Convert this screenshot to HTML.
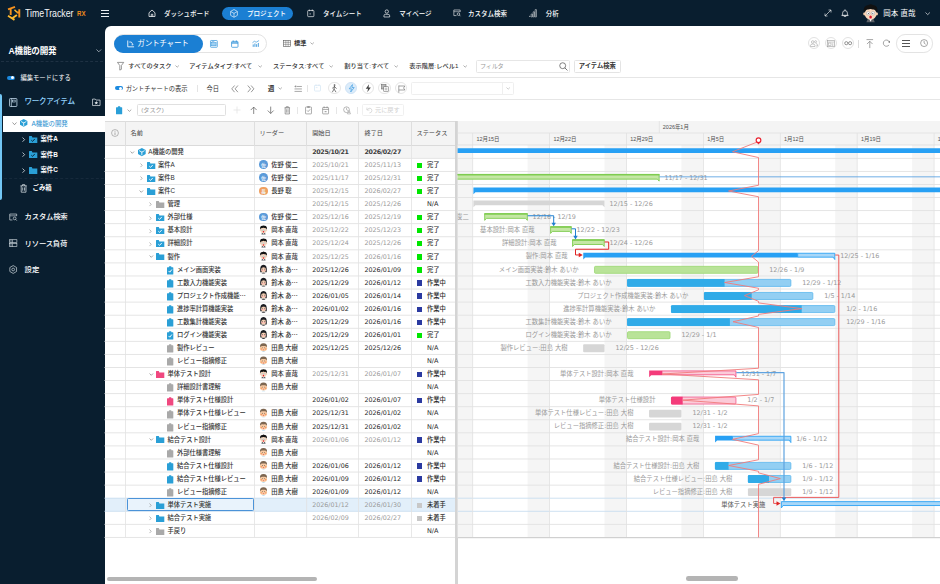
<!DOCTYPE html><html lang="ja"><head><meta charset="utf-8"><title>TimeTracker RX</title><style>
*{box-sizing:border-box;margin:0;padding:0}
html,body{width:940px;height:584px;overflow:hidden;background:#091e2f}
body{position:relative;font-family:"Liberation Sans","Noto Sans CJK JP",sans-serif;font-size:6.4px;color:#333;-webkit-font-smoothing:antialiased}
.a{position:absolute;white-space:nowrap}
.t{position:absolute;white-space:nowrap;line-height:10px;height:10px;margin-top:-5px}
.dj{font-family:"DejaVu Sans","Noto Sans CJK JP",sans-serif}
.w{color:#fff}
.nav{font-size:6.5px;font-weight:500;color:#fff}
.f{font-size:6.4px;color:#333}
.g{color:#999}
.hl{position:absolute;height:1px;background:#e6e6e6}
.vl{position:absolute;width:1px;background:#e6e6e6}
svg{position:absolute;left:0;top:0;overflow:visible}
</style></head><body>
<div class="a" style="left:104.50px;top:26.00px;width:836.00px;height:560.00px;background:#fff;border-top-left-radius:6px"></div>
<svg class="a" style="left:6.00px;top:4.00px;" width="16.00" height="18.00" viewBox="6 4 16 18"><g fill="none" stroke-width="1.9" stroke-linecap="butt"><path d="M8 9.4 L15 6.9 M10.7 8.4 V15" stroke="#f6921e"/><path d="M19.3 9.2 V17.4 M19.3 12.5 H16.8" stroke="#f6921e"/><path d="M17 12.3 L14.5 9.8" stroke="#fdb92e" stroke-width="1.5"/><path d="M8 15.8 L14.5 19.9 M12.3 18.2 L16.9 14.9" stroke="#fdb92e"/></g></svg>
<span class="t w" style="left:24.90px;top:14.00px;font-size:10.2px;transform:scaleX(0.86);transform-origin:left center;color:#f4f6f8">TimeTracker</span>
<span class="t " style="left:76.80px;top:14.40px;font-size:6.6px;font-weight:bold;color:#f28c1c;transform:scaleX(0.92);transform-origin:left center">RX</span>
<div class="a" style="left:101.20px;top:9.55px;width:7.60px;height:0.90px;background:#e8edf1"></div>
<div class="a" style="left:101.20px;top:12.55px;width:7.60px;height:0.90px;background:#e8edf1"></div>
<div class="a" style="left:101.20px;top:15.55px;width:7.60px;height:0.90px;background:#e8edf1"></div>
<svg class="a" style="left:147.50px;top:8.50px;" width="8.00" height="8.50" viewBox="0 0 16 17"><path d="M2 7.5 L8 2 L14 7.5 V15 H2 Z M6.5 15 V10.5 H9.5 V15" fill="none" stroke="#fff" stroke-width="1.5" stroke-linejoin="round"/></svg>
<span class="t nav" style="left:164.00px;top:13.80px;">ダッシュボード</span>
<div class="a" style="left:222.00px;top:6.80px;width:71.00px;height:13.00px;background:#1b7fd3;border-radius:6.5px"></div>
<svg class="a" style="left:230.20px;top:8.90px;" width="8.00" height="8.80" viewBox="0 0 16 17.6"><path d="M8 1 L14.8 4.9 V12.7 L8 16.6 L1.2 12.7 V4.9 Z M1.6 5.2 L8 8.8 L14.4 5.2 M8 8.8 V16.2" fill="none" stroke="#fff" stroke-width="1.25" stroke-linejoin="round"/></svg>
<span class="t nav" style="left:247.00px;top:13.80px;">プロジェクト</span>
<svg class="a" style="left:306.60px;top:9.00px;" width="7.60" height="8.40" viewBox="0 0 15 17"><rect x="1.2" y="3" width="12.6" height="12.5" rx="1.5" fill="none" stroke="#fff" stroke-width="1.3"/><path d="M4.5 1 V4.5 M10.5 1 V4.5" stroke="#fff" stroke-width="1.3"/><path d="M5 10 h2.5" stroke="#fff" stroke-width="1.6"/></svg>
<span class="t nav" style="left:323.00px;top:13.80px;">タイムシート</span>
<svg class="a" style="left:383.00px;top:8.80px;" width="7.60" height="8.60" viewBox="0 0 15 17"><circle cx="7.5" cy="5" r="3.3" fill="none" stroke="#fff" stroke-width="1.3"/><path d="M1.8 15.8 V13.5 Q1.8 10.5 5 10.5 H10 Q13.2 10.5 13.2 13.5 V15.8 Z" fill="none" stroke="#fff" stroke-width="1.3"/></svg>
<span class="t nav" style="left:399.20px;top:13.80px;">マイページ</span>
<svg class="a" style="left:452.50px;top:9.30px;" width="8.00" height="7.80" viewBox="0 0 16 16"><path d="M14.5 6 V2 H1.5 V13.5 H7" fill="none" stroke="#fff" stroke-width="1.2"/><path d="M1.5 5.5 H14.5" stroke="#fff" stroke-width="1"/><circle cx="11" cy="10.5" r="2.6" fill="none" stroke="#fff" stroke-width="1.2"/><path d="M13 12.5 L15 14.8" stroke="#fff" stroke-width="1.2"/></svg>
<span class="t nav" style="left:468.00px;top:13.80px;">カスタム検索</span>
<svg class="a" style="left:529.30px;top:9.00px;" width="8.00" height="8.50" viewBox="0 0 16 17"><circle cx="1.6" cy="14.6" r="1.1" fill="#fff"/><rect x="4.3" y="10" width="2.6" height="6" rx="0.6" fill="none" stroke="#fff" stroke-width="1"/><rect x="8.3" y="5.5" width="2.6" height="10.5" rx="0.6" fill="none" stroke="#fff" stroke-width="1"/><rect x="12.3" y="1" width="2.6" height="15" rx="0.6" fill="none" stroke="#fff" stroke-width="1"/></svg>
<span class="t nav" style="left:545.70px;top:13.80px;">分析</span>
<svg class="a" style="left:824.30px;top:9.20px;" width="8.00" height="8.00" viewBox="0 0 16 16"><path d="M2 14 L14 2 M9 2 H14 V7 M2 9 V14 H7" fill="none" stroke="#fff" stroke-width="1.2"/></svg>
<svg class="a" style="left:840.50px;top:8.80px;" width="8.00" height="8.60" viewBox="0 0 16 17"><path d="M3.2 12.5 V8 Q3.2 3.2 8 3.2 Q12.8 3.2 12.8 8 V12.5 Z M1.5 12.5 H14.5 M6.5 14.8 Q8 16 9.5 14.8 M8 1.2 V3" fill="none" stroke="#fff" stroke-width="1.3" stroke-linecap="round" stroke-linejoin="round"/></svg>
<svg width="940" height="584" style="pointer-events:none"><g transform="translate(870.60 13.00) scale(1.000)"><path d="M-4.2 9.2 L-3 6 L3 6 L4.2 9.2 Z" fill="#5a5f66"/><path d="M-1.3 6 L0 8.8 L1.3 6Z" fill="#fff"/><ellipse cx="-6.2" cy="0.8" rx="1.2" ry="1.6" fill="#f2c9a8"/><ellipse cx="6.2" cy="0.8" rx="1.2" ry="1.6" fill="#f2c9a8"/><ellipse cx="0" cy="0.8" rx="5.9" ry="5.8" fill="#f8d7bb"/><path d="M-6.6 -0.2 Q-8 -7.6 -2 -8 Q0 -9.4 2.4 -8 Q8 -7.4 6.6 -0.2 Q5.6 -4.2 2 -3.4 Q0 -4.6 -2.4 -3.4 Q-5.6 -4 -6.6 -0.2Z" fill="#111"/><circle cx="-2.4" cy="0.3" r="1.7" fill="#fff" stroke="#999" stroke-width="0.5"/><circle cx="2.4" cy="0.3" r="1.7" fill="#fff" stroke="#999" stroke-width="0.5"/><circle cx="-2.2" cy="0.4" r="0.5" fill="#333"/><circle cx="2.2" cy="0.4" r="0.5" fill="#333"/><ellipse cx="0" cy="4" rx="1.3" ry="1.5" fill="#e0142c"/></g></svg>
<span class="t nav" style="left:883.30px;top:13.70px;font-size:7.5px;font-weight:400">岡本 直哉</span>
<svg class="a" style="left:925.30px;top:11.50px;" width="5.40" height="3.40" viewBox="0 0 11 7"><path d="M1 1 L5.5 5.5 L10 1" fill="none" stroke="#fff" stroke-width="1.3"/></svg>
<span class="t w" style="left:8.50px;top:50.50px;font-size:8.6px;font-weight:bold;letter-spacing:-0.2px">A機能の開発</span>
<svg class="a" style="left:96.00px;top:49.00px;" width="5.60" height="3.60" viewBox="0 0 12 7.6"><path d="M1 1 L6 6 L11 1" fill="none" stroke="#c7d0d8" stroke-width="1.5"/></svg>
<div class="a" style="left:1.00px;top:61.30px;width:102.00px;height:0.00px;border-top:0.6px dashed #1e3143"></div>
<div class="a" style="left:6.70px;top:75.50px;width:8.50px;height:4.80px;background:#1b8ae0;border-radius:2.4px"></div>
<div class="a" style="left:11.20px;top:76.30px;width:3.20px;height:3.20px;background:#fff;border-radius:1.6px"></div>
<span class="t w" style="left:20.40px;top:78.10px;font-size:6.3px">編集モードにする</span>
<div class="a" style="left:0.00px;top:93.50px;width:2.40px;height:106.00px;background:#73c7f5;border-radius:0 2px 2px 0"></div>
<svg class="a" style="left:9.00px;top:97.70px;" width="8.40" height="9.00" viewBox="0 0 16.8 18"><rect x="1" y="1" width="14.8" height="16" rx="1.6" fill="none" stroke="#cfe6f7" stroke-width="1.5"/><path d="M4.6 1 V17" stroke="#cfe6f7" stroke-width="1.4"/><rect x="7.4" y="4.2" width="5" height="3.8" fill="none" stroke="#cfe6f7" stroke-width="1.2"/></svg>
<span class="t " style="left:24.40px;top:101.80px;font-size:7.6px;color:#8fd0fb;letter-spacing:-0.3px;font-weight:500">ワークアイテム</span>
<svg class="a" style="left:92.30px;top:97.80px;" width="8.60" height="8.10" viewBox="0 0 16 15"><path d="M1 2 H6 L7.5 3.8 H15 V14 H1 Z" fill="none" stroke="#e6edf2" stroke-width="1.3"/><path d="M8 5.5 L9 8 L11.5 8 L9.5 9.6 L10.3 12.2 L8 10.6 L5.7 12.2 L6.5 9.6 L4.5 8 L7 8 Z" fill="#e6edf2"/></svg>
<div class="a" style="left:3.00px;top:115.70px;width:101.50px;height:16.10px;background:#fff"></div>
<svg class="a" style="left:11.80px;top:121.50px;" width="5.00" height="3.40" viewBox="0 0 10 6.8"><path d="M1 1 L5 5.4 L9 1" fill="none" stroke="#666" stroke-width="1.3"/></svg>
<svg class="a" style="left:20.30px;top:119.30px;" width="7.40" height="7.84" viewBox="0 0 15.4 16.3"><path d="M7.7 0 L15.4 4.1 V12.2 L7.7 16.3 L0 12.2 V4.1 Z" fill="#2a9fd6"/><path d="M2.9 5.6 L7.7 8.3 L12.5 5.6 M7.7 8.3 V13.6" fill="none" stroke="#fff" stroke-width="1.7" stroke-linecap="round"/></svg>
<span class="t " style="left:31.50px;top:123.50px;font-size:6.4px;color:#2a8fd0">A機能の開発</span>
<svg class="a" style="left:22.30px;top:136.70px;" width="3.15" height="5.25" viewBox="0 0 6 10"><path d="M1 1 L5 5 L1 9" fill="none" stroke="#d3dae0" stroke-width="1.6"/></svg>
<svg class="a" style="left:29.00px;top:135.60px;" width="8.30" height="7.00" viewBox="0 0 16.6 14"><path d="M0 1 Q0 0 1 0 H5.6 L6.8 2.9 H16.6 V14 H0 Z" fill="#2a9fd6"/><path d="M4.6 8.4 L7.1 10.8 L11.6 5.9" fill="none" stroke="#091e2f" stroke-width="1.8"/></svg>
<span class="t w" style="left:40.40px;top:139.20px;font-size:6.4px;font-weight:bold">案件A</span>
<svg class="a" style="left:22.30px;top:152.30px;" width="3.15" height="5.25" viewBox="0 0 6 10"><path d="M1 1 L5 5 L1 9" fill="none" stroke="#d3dae0" stroke-width="1.6"/></svg>
<svg class="a" style="left:29.00px;top:151.20px;" width="8.30" height="7.00" viewBox="0 0 16.6 14"><path d="M0 1 Q0 0 1 0 H5.6 L6.8 2.9 H16.6 V14 H0 Z" fill="#2a9fd6"/><path d="M4.6 8.4 L7.1 10.8 L11.6 5.9" fill="none" stroke="#091e2f" stroke-width="1.8"/></svg>
<span class="t w" style="left:40.40px;top:154.80px;font-size:6.4px;font-weight:bold">案件B</span>
<svg class="a" style="left:22.30px;top:167.90px;" width="3.15" height="5.25" viewBox="0 0 6 10"><path d="M1 1 L5 5 L1 9" fill="none" stroke="#d3dae0" stroke-width="1.6"/></svg>
<svg class="a" style="left:29.00px;top:166.80px;" width="8.30" height="7.00" viewBox="0 0 16.6 14"><path d="M0 1 Q0 0 1 0 H5.6 L6.8 2.9 H16.6 V14 H0 Z" fill="#2a9fd6"/></svg>
<span class="t w" style="left:40.40px;top:170.40px;font-size:6.4px;font-weight:bold">案件C</span>
<div class="a" style="left:4.00px;top:178.30px;width:100.00px;height:0.00px;border-top:0.6px dashed #16293b"></div>
<svg class="a" style="left:19.80px;top:184.00px;" width="7.20" height="8.80" viewBox="0 0 14.4 17.6"><path d="M1 3.6 H13.4 M5 3.6 V1.2 H9.4 V3.6 M2.4 3.6 V16.4 H12 V3.6 M5.4 6.8 V13.4 M9 6.8 V13.4" fill="none" stroke="#e6edf2" stroke-width="1.4"/></svg>
<span class="t w" style="left:32.50px;top:188.30px;font-size:6.4px;font-weight:bold">ごみ箱</span>
<svg class="a" style="left:8.50px;top:212.80px;" width="8.40" height="8.00" viewBox="0 0 17 16"><path d="M15.5 6 V2 H1.5 V14 H7" fill="none" stroke="#dfe7ec" stroke-width="1.3"/><path d="M1.5 5.6 H15.5" stroke="#dfe7ec" stroke-width="1.1"/><circle cx="11.5" cy="10.8" r="2.8" fill="none" stroke="#dfe7ec" stroke-width="1.3"/><path d="M13.6 13 L15.8 15.4" stroke="#dfe7ec" stroke-width="1.3"/></svg>
<span class="t w" style="left:24.60px;top:217.20px;font-size:7.4px;letter-spacing:-0.25px;font-weight:500">カスタム検索</span>
<svg class="a" style="left:8.50px;top:238.80px;" width="8.40" height="8.40" viewBox="0 0 17 17"><rect x="1" y="1.5" width="15" height="6" fill="none" stroke="#dfe7ec" stroke-width="1.2"/><rect x="1" y="9.5" width="15" height="6" fill="none" stroke="#dfe7ec" stroke-width="1.2"/><path d="M4 1.5 V7.5 M7 1.5 V7.5 M4 9.5 V15.5 M7 9.5 V15.5" stroke="#dfe7ec" stroke-width="1.1"/></svg>
<span class="t w" style="left:24.60px;top:243.80px;font-size:7.4px;letter-spacing:-0.25px;font-weight:500">リソース負荷</span>
<svg class="a" style="left:8.50px;top:264.60px;" width="8.40" height="9.00" viewBox="0 0 17 18"><path d="M8.5 1 L15.3 5 V13 L8.5 17 L1.7 13 V5 Z" fill="none" stroke="#dfe7ec" stroke-width="1.3"/><circle cx="8.5" cy="9" r="2.8" fill="none" stroke="#dfe7ec" stroke-width="1.3"/></svg>
<span class="t w" style="left:24.60px;top:269.80px;font-size:7.4px;font-weight:500">設定</span>
<div class="a" style="left:114.30px;top:34.20px;width:152.40px;height:18.90px;border:0.8px solid #e3e3e3;border-radius:9.5px;background:#fff"></div>
<div class="a" style="left:114.30px;top:34.50px;width:89.00px;height:18.10px;background:#1b7fd3;border-radius:9.1px"></div>
<svg class="a" style="left:127.00px;top:39.90px;" width="7.60" height="7.60" viewBox="0 0 15 15"><path d="M1.5 1 V13.5 H14" fill="none" stroke="#fff" stroke-width="1.7"/><path d="M4.5 4 H8.5 L12 9.5 H9" fill="none" stroke="#fff" stroke-width="1.5"/></svg>
<span class="t w" style="left:137.30px;top:43.80px;font-size:7.6px;letter-spacing:-0.25px">ガントチャート</span>
<svg class="a" style="left:210.00px;top:39.70px;" width="7.80" height="7.80" viewBox="0 0 16 16"><rect x="1" y="1" width="14" height="14" rx="1.5" fill="none" stroke="#2a8fd8" stroke-width="1.4"/><rect x="3.5" y="5.5" width="9" height="6.5" fill="#9fd0f2" stroke="#2a8fd8" stroke-width="1"/><path d="M3.5 3.3 H9" stroke="#2a8fd8" stroke-width="1.1"/></svg>
<svg class="a" style="left:230.80px;top:39.60px;" width="7.60" height="7.90" viewBox="0 0 15 16"><rect x="1" y="2.8" width="13" height="12" rx="1.5" fill="#fff" stroke="#2a8fd8" stroke-width="1.5"/><path d="M1 6 H14" stroke="#2a8fd8" stroke-width="2.4"/><path d="M4.3 0.8 V4 M10.7 0.8 V4" stroke="#2a8fd8" stroke-width="1.4"/></svg>
<svg class="a" style="left:252.00px;top:40.00px;" width="7.80" height="7.40" viewBox="0 0 16 15"><path d="M1 5.5 L5 2.5 L8.5 4.5 L14.5 1" fill="none" stroke="#2a8fd8" stroke-width="1.3"/><path d="M2.5 9 V14 M6 7 V14 M9.5 8.5 V14 M13 6 V14" stroke="#2a8fd8" stroke-width="1.7"/></svg>
<svg class="a" style="left:283.00px;top:39.70px;" width="8.00" height="6.80" viewBox="0 0 16 14"><rect x="0.7" y="0.7" width="14.6" height="12.6" fill="none" stroke="#555" stroke-width="1.2"/><path d="M0.7 4.8 H15.3 M0.7 9 H15.3 M5.6 0.7 V13.3 M10.4 0.7 V13.3" stroke="#555" stroke-width="0.9"/></svg>
<span class="t " style="left:294.00px;top:43.30px;font-size:6.2px;font-weight:bold;color:#333">標準</span>
<svg class="a" style="left:310.00px;top:42.20px;" width="4.40" height="2.80" viewBox="0 0 9 5.6"><path d="M1 1 L4.5 4.4 L8 1" fill="none" stroke="#777" stroke-width="1.2"/></svg>
<div class="a" style="left:808.20px;top:37.30px;width:12.20px;height:12.20px;border:0.7px solid #e2e2e2;border-radius:6.1px"></div>
<div class="a" style="left:825.10px;top:37.30px;width:12.20px;height:12.20px;border:0.7px solid #e2e2e2;border-radius:6.1px"></div>
<div class="a" style="left:841.90px;top:37.30px;width:12.20px;height:12.20px;border:0.7px solid #e2e2e2;border-radius:6.1px"></div>
<svg class="a" style="left:810.30px;top:39.80px;" width="8.00" height="7.20" viewBox="0 0 16 14.4"><circle cx="5.5" cy="4" r="2.6" fill="none" stroke="#999" stroke-width="1.1"/><path d="M1 13 V11 Q1 8 5.5 8 Q10 8 10 11 V13 Z" fill="none" stroke="#999" stroke-width="1.1"/><circle cx="11.3" cy="3.3" r="2" fill="none" stroke="#999" stroke-width="1"/><path d="M11.5 7 Q15 7 15 10 V12 H12" fill="none" stroke="#999" stroke-width="1"/></svg>
<svg class="a" style="left:827.30px;top:39.80px;" width="7.80" height="7.20" viewBox="0 0 16 14.4"><rect x="0.8" y="0.8" width="14.4" height="12.8" fill="none" stroke="#999" stroke-width="1.2"/><path d="M0.8 4 H15.2" stroke="#999" stroke-width="1"/><rect x="3.2" y="6" width="5" height="5" fill="none" stroke="#999" stroke-width="1"/><path d="M10 6.5 H13 M10 9 H13 M10 11.2 H13" stroke="#999" stroke-width="0.9"/></svg>
<svg class="a" style="left:843.80px;top:41.30px;" width="8.40" height="4.40" viewBox="0 0 17 9"><circle cx="4.6" cy="4.5" r="3.2" fill="none" stroke="#777" stroke-width="1.6"/><circle cx="12.4" cy="4.5" r="3.2" fill="none" stroke="#777" stroke-width="1.6"/></svg>
<div class="a" style="left:858.30px;top:39.50px;width:0.70px;height:8.00px;background:#ddd"></div>
<svg class="a" style="left:865.50px;top:38.60px;" width="7.60" height="9.60" viewBox="0 0 15 19"><path d="M1 1.2 H14 M7.5 18 V4.5 M2 10 L7.5 4.5 L13 10" fill="none" stroke="#777" stroke-width="1.3"/></svg>
<svg class="a" style="left:881.80px;top:39.30px;" width="8.60" height="8.20" viewBox="0 0 17 16"><path d="M14 11.5 A6.2 6.2 0 1 1 14.2 5" fill="none" stroke="#777" stroke-width="1.3"/><path d="M15.8 7.6 L15.5 3.2 L11.6 5.6 Z" fill="#777"/></svg>
<div class="a" style="left:896.40px;top:34.40px;width:36.40px;height:18.20px;border:0.8px solid #e3e3e3;border-radius:9.1px"></div>
<div class="a" style="left:902.20px;top:40.35px;width:7.80px;height:0.90px;background:#555"></div>
<div class="a" style="left:902.20px;top:43.05px;width:7.80px;height:0.90px;background:#555"></div>
<div class="a" style="left:902.20px;top:45.75px;width:7.80px;height:0.90px;background:#555"></div>
<svg class="a" style="left:919.80px;top:39.40px;" width="8.20" height="8.20" viewBox="0 0 16 16"><circle cx="8" cy="8" r="6.8" fill="none" stroke="#777" stroke-width="1.3"/><path d="M8 3.8 V8 L11 10.2" fill="none" stroke="#777" stroke-width="1.3"/></svg>
<svg class="a" style="left:117.20px;top:62.00px;" width="7.20" height="8.60" viewBox="0 0 14 17"><path d="M0.8 0.8 H13.2 L8.6 7 V14.5 L5.4 16 V7 Z" fill="none" stroke="#666" stroke-width="1.3" stroke-linejoin="round"/></svg>
<span class="t f" style="left:128.30px;top:66.30px;font-size:6.2px;font-weight:500;letter-spacing:0.1px">すべてのタスク</span>
<svg class="a" style="left:174.80px;top:65.30px;" width="4.40" height="2.80" viewBox="0 0 9 5.6"><path d="M1 1 L4.5 4.4 L8 1" fill="none" stroke="#777" stroke-width="1.2"/></svg>
<span class="t f" style="left:189.30px;top:66.30px;font-size:6.2px;letter-spacing:0.05px;font-weight:500">アイテムタイプ:すべて</span>
<svg class="a" style="left:258.20px;top:65.30px;" width="4.40" height="2.80" viewBox="0 0 9 5.6"><path d="M1 1 L4.5 4.4 L8 1" fill="none" stroke="#777" stroke-width="1.2"/></svg>
<span class="t f" style="left:273.00px;top:66.30px;font-size:6.2px;font-weight:500;letter-spacing:0.1px">ステータス:すべて</span>
<svg class="a" style="left:328.70px;top:65.30px;" width="4.40" height="2.80" viewBox="0 0 9 5.6"><path d="M1 1 L4.5 4.4 L8 1" fill="none" stroke="#777" stroke-width="1.2"/></svg>
<span class="t f" style="left:344.20px;top:66.30px;font-size:6.2px;font-weight:500;letter-spacing:0.1px">割り当て:すべて</span>
<svg class="a" style="left:393.70px;top:65.30px;" width="4.40" height="2.80" viewBox="0 0 9 5.6"><path d="M1 1 L4.5 4.4 L8 1" fill="none" stroke="#777" stroke-width="1.2"/></svg>
<span class="t f" style="left:409.20px;top:66.30px;font-size:6.2px;font-weight:500;letter-spacing:0.1px">表示階層:レベル1</span>
<svg class="a" style="left:462.50px;top:65.30px;" width="4.40" height="2.80" viewBox="0 0 9 5.6"><path d="M1 1 L4.5 4.4 L8 1" fill="none" stroke="#777" stroke-width="1.2"/></svg>
<div class="a" style="left:475.50px;top:60.40px;width:94.50px;height:12.20px;border:0.7px solid #e6e6e6;border-radius:1.5px;background:#fff"></div>
<span class="t " style="left:480.00px;top:66.30px;font-size:6.2px;color:#999;letter-spacing:-0.3px">フィルタ</span>
<svg class="a" style="left:559.30px;top:61.80px;" width="9.00" height="9.00" viewBox="0 0 17 17"><circle cx="7" cy="7" r="5.6" fill="none" stroke="#555" stroke-width="1.4"/><path d="M11 11 L16 16" stroke="#555" stroke-width="1.5"/></svg>
<div class="a" style="left:574.30px;top:60.40px;width:46.50px;height:12.20px;border:0.7px solid #e4e4e4;border-radius:1.5px;background:#fff"></div>
<span class="t " style="left:578.70px;top:66.30px;font-size:6.3px;font-weight:600;color:#333">アイテム検索</span>
<div class="a" style="left:104.50px;top:77.10px;width:836.00px;height:0.80px;background:#e6e6e6"></div>
<div class="a" style="left:114.80px;top:86.10px;width:8.20px;height:4.40px;background:#1b8ae0;border-radius:2.2px"></div>
<div class="a" style="left:119.20px;top:86.80px;width:3.00px;height:3.00px;background:#fff;border-radius:1.5px"></div>
<span class="t f" style="left:125.70px;top:88.70px;font-size:6.3px;letter-spacing:-0.12px">ガントチャートの表示</span>
<div class="a" style="left:197.20px;top:84.50px;width:0.70px;height:7.50px;background:#e4e4e4"></div>
<span class="t f" style="left:206.40px;top:88.70px;font-size:6.3px">今日</span>
<svg class="a" style="left:230.60px;top:84.60px;" width="7.70" height="7.70" viewBox="0 0 15 15"><path d="M7 1 L1.5 7.5 L7 14 M13.5 1 L8 7.5 L13.5 14" fill="none" stroke="#666" stroke-width="1.3"/></svg>
<svg class="a" style="left:246.80px;top:84.60px;" width="7.70" height="7.70" viewBox="0 0 15 15"><path d="M1.5 1 L7 7.5 L1.5 14 M8 1 L13.5 7.5 L8 14" fill="none" stroke="#666" stroke-width="1.3"/></svg>
<span class="t f" style="left:268.00px;top:88.70px;font-size:6.3px;font-weight:bold">週</span>
<svg class="a" style="left:277.80px;top:87.20px;" width="4.40" height="2.80" viewBox="0 0 9 5.6"><path d="M1 1 L4.5 4.4 L8 1" fill="none" stroke="#777" stroke-width="1.2"/></svg>
<svg class="a" style="left:293.80px;top:84.60px;" width="8.40" height="7.40" viewBox="0 0 17 15"><path d="M1 3 H5 M1 8 H16 M1 13 H16 M6 3 H16" stroke="#777" stroke-width="1.3"/><path d="M3.5 0.5 V5" stroke="#777" stroke-width="1.1"/></svg>
<div class="a" style="left:307.00px;top:84.50px;width:0.70px;height:7.50px;background:#e4e4e4"></div>
<svg class="a" style="left:314.30px;top:84.40px;" width="7.00" height="7.60" viewBox="0 0 14 15"><rect x="1" y="2.5" width="12" height="11.5" rx="1.3" fill="none" stroke="#cfe3f3" stroke-width="1.3"/><path d="M4 0.8 V4 M10 0.8 V4 M3.5 7 H7" stroke="#cfe3f3" stroke-width="1.2"/></svg>
<div class="a" style="left:328.30px;top:81.90px;width:12.40px;height:12.40px;border:0.7px solid #e6e6e6;border-radius:6.2px;background:#fff"></div>
<div class="a" style="left:345.00px;top:81.90px;width:12.40px;height:12.40px;border:0.7px solid #cfe3f6;border-radius:6.2px;background:#dcecfa"></div>
<div class="a" style="left:361.80px;top:81.90px;width:12.40px;height:12.40px;border:0.7px solid #e6e6e6;border-radius:6.2px;background:#fff"></div>
<div class="a" style="left:378.40px;top:81.90px;width:12.40px;height:12.40px;border:0.7px solid #e6e6e6;border-radius:6.2px;background:#fff"></div>
<div class="a" style="left:395.10px;top:81.90px;width:12.40px;height:12.40px;border:0.7px solid #e6e6e6;border-radius:6.2px;background:#fff"></div>
<svg class="a" style="left:331.20px;top:84.00px;" width="6.60" height="8.60" viewBox="0 0 13 17"><circle cx="7" cy="2" r="1.7" fill="#555"/><path d="M7 4.5 L6 10 L3 15.5 M6 10 L9.5 15.5 M6.8 5 L3 8 M7 5.5 L10.5 8.5" fill="none" stroke="#555" stroke-width="1.5" stroke-linecap="round"/></svg>
<svg class="a" style="left:347.60px;top:84.00px;" width="7.40" height="8.60" viewBox="0 0 15 17"><path d="M9 1 L2.5 9.5 H7 L5.5 16 L12.5 7 H8 Z" fill="none" stroke="#3a9be0" stroke-width="1.4" stroke-linejoin="round"/></svg>
<svg class="a" style="left:364.80px;top:84.00px;" width="6.60" height="8.60" viewBox="0 0 13 17"><path d="M8 0.5 L1.5 9.5 H6 L4.5 16.5 L11.5 7 H7 Z" fill="#444"/></svg>
<svg class="a" style="left:380.60px;top:84.40px;" width="8.00" height="8.00" viewBox="0 0 16 16"><rect x="1" y="1" width="9" height="9" fill="#bbb" stroke="#666" stroke-width="1.1"/><rect x="5.5" y="5.5" width="9" height="9" fill="#fff" stroke="#666" stroke-width="1.1"/><path d="M7.5 8.5 H12.5 M7.5 11.5 H12.5" stroke="#666" stroke-width="1"/></svg>
<svg class="a" style="left:397.60px;top:84.60px;" width="7.60" height="8.00" viewBox="0 0 15 16"><path d="M1.5 1 V15.5 M1.5 2 H13.5 L11 6 L13.5 10 H1.5" fill="none" stroke="#666" stroke-width="1.2" stroke-linejoin="round"/></svg>
<div class="a" style="left:410.70px;top:81.60px;width:103.80px;height:13.30px;border:0.7px solid #efefef;border-radius:1.5px"></div>
<div class="a" style="left:502.00px;top:81.60px;width:0.70px;height:13.30px;background:#efefef"></div>
<svg class="a" style="left:506.00px;top:87.20px;" width="4.40" height="2.80" viewBox="0 0 9 5.6"><path d="M1 1 L4.5 4.4 L8 1" fill="none" stroke="#aaa" stroke-width="1.2"/></svg>
<div class="a" style="left:104.50px;top:99.10px;width:836.00px;height:0.80px;background:#e6e6e6"></div>
<svg class="a" style="left:115.60px;top:106.00px;" width="6.20" height="8.40" viewBox="0 0 12 16.2"><path d="M1 2.5 H3.6 V1.2 Q3.6 0.4 4.4 0.4 H7.6 Q8.4 0.4 8.4 1.2 V2.5 H11 Q12 2.5 12 3.5 V15 Q12 16 11 16 H1 Q0 16 0 15 V3.5 Q0 2.5 1 2.5 Z" fill="#2a9fd8"/></svg>
<svg class="a" style="left:126.80px;top:109.20px;" width="4.84" height="3.08" viewBox="0 0 9 5.6"><path d="M1 1 L4.5 4.4 L8 1" fill="none" stroke="#777" stroke-width="1.2"/></svg>
<div class="a" style="left:137.20px;top:104.30px;width:89.00px;height:12.00px;border:0.7px solid #e0e0e0;border-radius:1.5px"></div>
<span class="t " style="left:141.20px;top:110.30px;font-size:6.2px;color:#999">(タスク)</span>
<svg class="a" style="left:233.00px;top:106.30px;" width="8.00" height="8.00" viewBox="0 0 16 16"><path d="M8 1 V15 M1 8 H15" stroke="#e2e2e2" stroke-width="1.5"/></svg>
<svg class="a" style="left:250.00px;top:106.00px;" width="7.40" height="8.60" viewBox="0 0 15 17"><path d="M7.5 16 V2 M1.5 8 L7.5 2 L13.5 8" fill="none" stroke="#555" stroke-width="1.4"/></svg>
<svg class="a" style="left:266.60px;top:106.00px;" width="7.40" height="8.60" viewBox="0 0 15 17"><path d="M7.5 1 V15 M1.5 9 L7.5 15 L13.5 9" fill="none" stroke="#555" stroke-width="1.4"/></svg>
<svg class="a" style="left:283.60px;top:106.00px;" width="6.60" height="8.60" viewBox="0 0 13 17"><path d="M1 3.5 H12 M4.5 3.5 V1.2 H8.5 V3.5" fill="none" stroke="#777" stroke-width="1.2"/><path d="M2.2 3.5 V15.8 H10.8 V3.5 Z" fill="#ececec" stroke="#777" stroke-width="1.2"/><path d="M5 6.5 V13 M8 6.5 V13" stroke="#777" stroke-width="1"/></svg>
<div class="a" style="left:297.40px;top:106.50px;width:0.70px;height:7.50px;background:#e6e6e6"></div>
<svg class="a" style="left:304.80px;top:106.00px;" width="7.00" height="8.40" viewBox="0 0 14 17"><rect x="1" y="2" width="12" height="14" rx="1" fill="none" stroke="#777" stroke-width="1.2"/><path d="M4.5 0.8 H9.5 V3.2 H4.5Z" fill="#777"/><path d="M4 9 L6.3 11.3 L10.3 6.8" fill="none" stroke="#777" stroke-width="1.3"/></svg>
<svg class="a" style="left:321.60px;top:106.00px;" width="7.20" height="8.40" viewBox="0 0 14 17"><rect x="1" y="3" width="12" height="13" rx="1" fill="none" stroke="#777" stroke-width="1.2"/><path d="M4 0.8 V4.5 M10 0.8 V4.5 M1 7 H13" stroke="#777" stroke-width="1.2"/><path d="M5 11.5 H9" stroke="#777" stroke-width="1.6"/></svg>
<div class="a" style="left:336.20px;top:106.50px;width:0.70px;height:7.50px;background:#e6e6e6"></div>
<svg class="a" style="left:342.80px;top:106.00px;" width="8.00" height="8.40" viewBox="0 0 16 17"><circle cx="7" cy="7.5" r="5.8" fill="none" stroke="#888" stroke-width="1.2"/><path d="M7 3.5 V7.5 L10 9" fill="none" stroke="#888" stroke-width="1.1"/><path d="M9 16 V14.5 Q9 12.5 12 12.5 Q15 12.5 15 14.5 V16 Z" fill="#fff" stroke="#888" stroke-width="1"/><circle cx="12" cy="10.8" r="1.6" fill="#fff" stroke="#888" stroke-width="1"/></svg>
<div class="a" style="left:356.60px;top:106.50px;width:0.70px;height:7.50px;background:#e6e6e6"></div>
<div class="a" style="left:362.00px;top:104.40px;width:42.30px;height:12.00px;border:0.7px solid #f0f0f0;border-radius:1.5px"></div>
<svg class="a" style="left:365.60px;top:107.00px;" width="6.80" height="6.60" viewBox="0 0 12 12"><path d="M1.5 1 V5.5 H6 M1.8 5.2 Q4 1.8 7.2 2.2 Q10.8 3 10.6 6.8 Q10 10.8 6 10.8" fill="none" stroke="#cfcfcf" stroke-width="1.3"/></svg>
<span class="t " style="left:375.00px;top:110.30px;font-size:6.2px;color:#d0d0d0">元に戻す</span>
<div class="a" style="left:104.50px;top:121.00px;width:351.00px;height:24.00px;background:#f4f4f4"></div>
<div class="a" style="left:104.50px;top:120.60px;width:836.00px;height:0.80px;background:#dcdcdc"></div>
<div class="a" style="left:104.50px;top:144.60px;width:351.00px;height:0.80px;background:#dadada"></div>
<div class="a" style="left:125.10px;top:121.00px;width:0.80px;height:24.00px;background:#dedede"></div>
<div class="a" style="left:254.10px;top:121.00px;width:0.80px;height:24.00px;background:#dedede"></div>
<div class="a" style="left:306.30px;top:121.00px;width:0.80px;height:24.00px;background:#dedede"></div>
<div class="a" style="left:358.10px;top:121.00px;width:0.80px;height:24.00px;background:#dedede"></div>
<div class="a" style="left:411.10px;top:121.00px;width:0.80px;height:24.00px;background:#dedede"></div>
<svg class="a" style="left:111.00px;top:129.20px;" width="8.00" height="8.00" viewBox="0 0 14 14"><circle cx="7" cy="7" r="6" fill="none" stroke="#888" stroke-width="1"/><path d="M7 6 V10.5" stroke="#888" stroke-width="1.2"/><circle cx="7" cy="3.9" r="0.8" fill="#888"/></svg>
<span class="t " style="left:130.50px;top:133.20px;font-size:6.2px;color:#444">名前</span>
<span class="t " style="left:259.50px;top:133.20px;font-size:6.2px;color:#444">リーダー</span>
<span class="t " style="left:312.20px;top:133.20px;font-size:6.2px;color:#444">開始日</span>
<span class="t " style="left:364.50px;top:133.20px;font-size:6.2px;color:#444">終了日</span>
<span class="t " style="left:416.50px;top:133.20px;font-size:6.2px;color:#444">ステータス</span>
<div class="a" style="left:254.50px;top:145.25px;width:200.50px;height:13.07px;background:#f4f4f4"></div>
<div class="a" style="left:104.50px;top:144.60px;width:351.00px;height:0.80px;background:#dadada"></div>
<div class="a" style="left:104.50px;top:498.19px;width:351.00px;height:13.07px;background:#e2effa"></div>
<svg width="940" height="584"><rect x="104.5" y="157.87" width="351" height="0.9" fill="#e2e2e2"/><rect x="104.5" y="170.94" width="351" height="0.9" fill="#e2e2e2"/><rect x="104.5" y="184.02" width="351" height="0.9" fill="#e2e2e2"/><rect x="104.5" y="197.09" width="351" height="0.9" fill="#e2e2e2"/><rect x="104.5" y="210.16" width="351" height="0.9" fill="#e2e2e2"/><rect x="104.5" y="223.23" width="351" height="0.9" fill="#e2e2e2"/><rect x="104.5" y="236.30" width="351" height="0.9" fill="#e2e2e2"/><rect x="104.5" y="249.38" width="351" height="0.9" fill="#e2e2e2"/><rect x="104.5" y="262.45" width="351" height="0.9" fill="#e2e2e2"/><rect x="104.5" y="275.52" width="351" height="0.9" fill="#e2e2e2"/><rect x="104.5" y="288.59" width="351" height="0.9" fill="#e2e2e2"/><rect x="104.5" y="301.66" width="351" height="0.9" fill="#e2e2e2"/><rect x="104.5" y="314.74" width="351" height="0.9" fill="#e2e2e2"/><rect x="104.5" y="327.81" width="351" height="0.9" fill="#e2e2e2"/><rect x="104.5" y="340.88" width="351" height="0.9" fill="#e2e2e2"/><rect x="104.5" y="353.95" width="351" height="0.9" fill="#e2e2e2"/><rect x="104.5" y="367.02" width="351" height="0.9" fill="#e2e2e2"/><rect x="104.5" y="380.10" width="351" height="0.9" fill="#e2e2e2"/><rect x="104.5" y="393.17" width="351" height="0.9" fill="#e2e2e2"/><rect x="104.5" y="406.24" width="351" height="0.9" fill="#e2e2e2"/><rect x="104.5" y="419.31" width="351" height="0.9" fill="#e2e2e2"/><rect x="104.5" y="432.38" width="351" height="0.9" fill="#e2e2e2"/><rect x="104.5" y="445.46" width="351" height="0.9" fill="#e2e2e2"/><rect x="104.5" y="458.53" width="351" height="0.9" fill="#e2e2e2"/><rect x="104.5" y="471.60" width="351" height="0.9" fill="#e2e2e2"/><rect x="104.5" y="484.67" width="351" height="0.9" fill="#e2e2e2"/><rect x="104.5" y="497.74" width="351" height="0.9" fill="#c9def0"/><rect x="104.5" y="510.82" width="351" height="0.9" fill="#c9def0"/><rect x="104.5" y="523.89" width="351" height="0.9" fill="#e2e2e2"/><rect x="104.5" y="536.96" width="351" height="0.9" fill="#e2e2e2"/><rect x="125.10" y="145.25" width="0.8" height="392.16" fill="#e2e2e2"/><rect x="254.10" y="145.25" width="0.8" height="392.16" fill="#e2e2e2"/><rect x="306.30" y="145.25" width="0.8" height="392.16" fill="#e2e2e2"/><rect x="358.10" y="145.25" width="0.8" height="392.16" fill="#e2e2e2"/><rect x="411.10" y="145.25" width="0.8" height="392.16" fill="#e2e2e2"/></svg>
<div class="a" style="left:127.30px;top:498.49px;width:126.60px;height:12.27px;border:1px solid #4b93d8;background:#e9f3fc;border-radius:1.3px"></div>
<svg class="a" style="left:130.00px;top:150.89px;" width="4.60" height="3.00" viewBox="0 0 9 6"><path d="M1 1 L4.5 4.6 L8 1" fill="none" stroke="#777" stroke-width="1.3"/></svg>
<svg class="a" style="left:137.80px;top:148.29px;" width="7.70" height="8.16" viewBox="0 0 15.4 16.3"><path d="M7.7 0 L15.4 4.1 V12.2 L7.7 16.3 L0 12.2 V4.1 Z" fill="#2a9fd6"/><path d="M2.9 5.6 L7.7 8.3 L12.5 5.6 M7.7 8.3 V13.6" fill="none" stroke="#fff" stroke-width="1.7" stroke-linecap="round"/></svg>
<span class="t " style="left:148.25px;top:151.99px;font-size:6.3px;color:#333;letter-spacing:-0.05px;font-weight:500;font-family:'Liberation Sans','Noto Sans CJK JP',sans-serif">A機能の開発</span>
<span class="t dj" style="left:312.20px;top:151.99px;font-size:6.35px;color:#3c3c3c;font-weight:bold;letter-spacing:-0.35px;">2025/10/21</span>
<span class="t dj" style="left:364.50px;top:151.99px;font-size:6.35px;color:#3c3c3c;font-weight:bold;letter-spacing:-0.35px;">2026/02/27</span>
<svg class="a" style="left:139.95px;top:163.26px;" width="2.80" height="4.60" viewBox="0 0 5.6 9.2"><path d="M1 1 L4.4 4.6 L1 8.2" fill="none" stroke="#888" stroke-width="1.2"/></svg>
<svg class="a" style="left:146.75px;top:161.86px;" width="8.30" height="7.00" viewBox="0 0 16.6 14"><path d="M0 1 Q0 0 1 0 H5.6 L6.8 2.9 H16.6 V14 H0 Z" fill="#2a9fd6"/><path d="M4.6 8.4 L7.1 10.8 L11.6 5.9" fill="none" stroke="#fff" stroke-width="1.8"/></svg>
<span class="t " style="left:157.95px;top:165.06px;font-size:6.3px;color:#333;letter-spacing:-0.05px;font-weight:500;font-family:'Liberation Sans','Noto Sans CJK JP',sans-serif">案件A</span>
<div class="a" style="left:259.30px;top:160.36px;width:8.60px;height:8.60px;background:#5a9ad9;border-radius:4.3px"></div>
<span class="t w" style="left:261.05px;top:164.66px;font-size:5px;font-weight:500;color:#eef5fc">佐</span>
<span class="t " style="left:271.30px;top:165.06px;font-size:6.3px;color:#333;font-weight:500;font-family:'Noto Sans CJK JP',sans-serif">佐野 俊二</span>
<span class="t dj" style="left:312.20px;top:165.06px;font-size:6.35px;color:#999;">2025/10/21</span>
<span class="t dj" style="left:364.50px;top:165.06px;font-size:6.35px;color:#999;">2025/11/13</span>
<div class="a" style="left:417.20px;top:162.76px;width:5.30px;height:5.30px;background:#00e600"></div>
<span class="t " style="left:427.00px;top:165.06px;font-size:6.3px;color:#2a2a2a;font-weight:500">完了</span>
<svg class="a" style="left:139.95px;top:176.33px;" width="2.80" height="4.60" viewBox="0 0 5.6 9.2"><path d="M1 1 L4.4 4.6 L1 8.2" fill="none" stroke="#888" stroke-width="1.2"/></svg>
<svg class="a" style="left:146.75px;top:174.93px;" width="8.30" height="7.00" viewBox="0 0 16.6 14"><path d="M0 1 Q0 0 1 0 H5.6 L6.8 2.9 H16.6 V14 H0 Z" fill="#2a9fd6"/><path d="M4.6 8.4 L7.1 10.8 L11.6 5.9" fill="none" stroke="#fff" stroke-width="1.8"/></svg>
<span class="t " style="left:157.95px;top:178.13px;font-size:6.3px;color:#333;letter-spacing:-0.05px;font-weight:500;font-family:'Liberation Sans','Noto Sans CJK JP',sans-serif">案件B</span>
<div class="a" style="left:259.30px;top:173.43px;width:8.60px;height:8.60px;background:#5a9ad9;border-radius:4.3px"></div>
<span class="t w" style="left:261.05px;top:177.73px;font-size:5px;font-weight:500;color:#eef5fc">佐</span>
<span class="t " style="left:271.30px;top:178.13px;font-size:6.3px;color:#333;font-weight:500;font-family:'Noto Sans CJK JP',sans-serif">佐野 俊二</span>
<span class="t dj" style="left:312.20px;top:178.13px;font-size:6.35px;color:#999;">2025/11/17</span>
<span class="t dj" style="left:364.50px;top:178.13px;font-size:6.35px;color:#999;">2025/12/31</span>
<div class="a" style="left:417.20px;top:175.83px;width:5.30px;height:5.30px;background:#00e600"></div>
<span class="t " style="left:427.00px;top:178.13px;font-size:6.3px;color:#2a2a2a;font-weight:500">完了</span>
<svg class="a" style="left:139.45px;top:190.10px;" width="4.60" height="3.00" viewBox="0 0 9 6"><path d="M1 1 L4.5 4.6 L8 1" fill="none" stroke="#777" stroke-width="1.3"/></svg>
<svg class="a" style="left:146.75px;top:188.00px;" width="8.30" height="7.00" viewBox="0 0 16.6 14"><path d="M0 1 Q0 0 1 0 H5.6 L6.8 2.9 H16.6 V14 H0 Z" fill="#2a9fd6"/></svg>
<span class="t " style="left:157.95px;top:191.20px;font-size:6.3px;color:#333;letter-spacing:-0.05px;font-weight:500;font-family:'Liberation Sans','Noto Sans CJK JP',sans-serif">案件C</span>
<div class="a" style="left:259.30px;top:186.50px;width:8.60px;height:8.60px;background:#f0a060;border-radius:4.3px"></div>
<span class="t w" style="left:261.05px;top:190.80px;font-size:5px;font-weight:500;color:#eef5fc">長</span>
<span class="t " style="left:271.30px;top:191.20px;font-size:6.3px;color:#333;font-weight:500;font-family:'Noto Sans CJK JP',sans-serif">長野 聡</span>
<span class="t dj" style="left:312.20px;top:191.20px;font-size:6.35px;color:#999;">2025/12/15</span>
<span class="t dj" style="left:364.50px;top:191.20px;font-size:6.35px;color:#999;">2026/02/27</span>
<div class="a" style="left:417.20px;top:188.90px;width:5.30px;height:5.30px;background:#00e600"></div>
<span class="t " style="left:427.00px;top:191.20px;font-size:6.3px;color:#2a2a2a;font-weight:500">完了</span>
<svg class="a" style="left:149.40px;top:202.47px;" width="2.80" height="4.60" viewBox="0 0 5.6 9.2"><path d="M1 1 L4.4 4.6 L1 8.2" fill="none" stroke="#888" stroke-width="1.2"/></svg>
<svg class="a" style="left:156.20px;top:201.07px;" width="8.30" height="7.00" viewBox="0 0 16.6 14"><path d="M0 1 Q0 0 1 0 H5.6 L6.8 2.9 H16.6 V14 H0 Z" fill="#a9a9a9"/></svg>
<span class="t " style="left:167.40px;top:204.27px;font-size:6.3px;color:#333;letter-spacing:-0.05px;font-weight:500;font-family:'Liberation Sans','Noto Sans CJK JP',sans-serif">管理</span>
<span class="t dj" style="left:312.20px;top:204.27px;font-size:6.35px;color:#999;">2025/12/15</span>
<span class="t dj" style="left:364.50px;top:204.27px;font-size:6.35px;color:#999;">2025/12/26</span>
<span class="t dj" style="left:427.00px;top:204.27px;font-size:6.5px;color:#2a2a2a;font-weight:400">N/A</span>
<svg class="a" style="left:149.40px;top:215.55px;" width="2.80" height="4.60" viewBox="0 0 5.6 9.2"><path d="M1 1 L4.4 4.6 L1 8.2" fill="none" stroke="#888" stroke-width="1.2"/></svg>
<svg class="a" style="left:156.20px;top:214.15px;" width="8.30" height="7.00" viewBox="0 0 16.6 14"><path d="M0 1 Q0 0 1 0 H5.6 L6.8 2.9 H16.6 V14 H0 Z" fill="#2a9fd6"/><path d="M4.6 8.4 L7.1 10.8 L11.6 5.9" fill="none" stroke="#fff" stroke-width="1.8"/></svg>
<span class="t " style="left:167.40px;top:217.35px;font-size:6.3px;color:#333;letter-spacing:-0.05px;font-weight:500;font-family:'Liberation Sans','Noto Sans CJK JP',sans-serif">外部仕様</span>
<div class="a" style="left:259.30px;top:212.65px;width:8.60px;height:8.60px;background:#5a9ad9;border-radius:4.3px"></div>
<span class="t w" style="left:261.05px;top:216.95px;font-size:5px;font-weight:500;color:#eef5fc">佐</span>
<span class="t " style="left:271.30px;top:217.35px;font-size:6.3px;color:#333;font-weight:500;font-family:'Noto Sans CJK JP',sans-serif">佐野 俊二</span>
<span class="t dj" style="left:312.20px;top:217.35px;font-size:6.35px;color:#999;">2025/12/16</span>
<span class="t dj" style="left:364.50px;top:217.35px;font-size:6.35px;color:#999;">2025/12/19</span>
<div class="a" style="left:417.20px;top:215.05px;width:5.30px;height:5.30px;background:#00e600"></div>
<span class="t " style="left:427.00px;top:217.35px;font-size:6.3px;color:#2a2a2a;font-weight:500">完了</span>
<svg class="a" style="left:149.40px;top:228.62px;" width="2.80" height="4.60" viewBox="0 0 5.6 9.2"><path d="M1 1 L4.4 4.6 L1 8.2" fill="none" stroke="#888" stroke-width="1.2"/></svg>
<svg class="a" style="left:156.20px;top:227.22px;" width="8.30" height="7.00" viewBox="0 0 16.6 14"><path d="M0 1 Q0 0 1 0 H5.6 L6.8 2.9 H16.6 V14 H0 Z" fill="#2a9fd6"/><path d="M4.6 8.4 L7.1 10.8 L11.6 5.9" fill="none" stroke="#fff" stroke-width="1.8"/></svg>
<span class="t " style="left:167.40px;top:230.42px;font-size:6.3px;color:#333;letter-spacing:-0.05px;font-weight:500;font-family:'Liberation Sans','Noto Sans CJK JP',sans-serif">基本設計</span>
<span class="t " style="left:271.30px;top:230.42px;font-size:6.3px;color:#333;font-weight:500;font-family:'Noto Sans CJK JP',sans-serif">岡本 直哉</span>
<span class="t dj" style="left:312.20px;top:230.42px;font-size:6.35px;color:#999;">2025/12/22</span>
<span class="t dj" style="left:364.50px;top:230.42px;font-size:6.35px;color:#999;">2025/12/23</span>
<div class="a" style="left:417.20px;top:228.12px;width:5.30px;height:5.30px;background:#00e600"></div>
<span class="t " style="left:427.00px;top:230.42px;font-size:6.3px;color:#2a2a2a;font-weight:500">完了</span>
<svg class="a" style="left:149.40px;top:241.69px;" width="2.80" height="4.60" viewBox="0 0 5.6 9.2"><path d="M1 1 L4.4 4.6 L1 8.2" fill="none" stroke="#888" stroke-width="1.2"/></svg>
<svg class="a" style="left:156.20px;top:240.29px;" width="8.30" height="7.00" viewBox="0 0 16.6 14"><path d="M0 1 Q0 0 1 0 H5.6 L6.8 2.9 H16.6 V14 H0 Z" fill="#2a9fd6"/><path d="M4.6 8.4 L7.1 10.8 L11.6 5.9" fill="none" stroke="#fff" stroke-width="1.8"/></svg>
<span class="t " style="left:167.40px;top:243.49px;font-size:6.3px;color:#333;letter-spacing:-0.05px;font-weight:500;font-family:'Liberation Sans','Noto Sans CJK JP',sans-serif">詳細設計</span>
<span class="t " style="left:271.30px;top:243.49px;font-size:6.3px;color:#333;font-weight:500;font-family:'Noto Sans CJK JP',sans-serif">岡本 直哉</span>
<span class="t dj" style="left:312.20px;top:243.49px;font-size:6.35px;color:#999;">2025/12/24</span>
<span class="t dj" style="left:364.50px;top:243.49px;font-size:6.35px;color:#999;">2025/12/26</span>
<div class="a" style="left:417.20px;top:241.19px;width:5.30px;height:5.30px;background:#00e600"></div>
<span class="t " style="left:427.00px;top:243.49px;font-size:6.3px;color:#2a2a2a;font-weight:500">完了</span>
<svg class="a" style="left:148.90px;top:255.46px;" width="4.60" height="3.00" viewBox="0 0 9 6"><path d="M1 1 L4.5 4.6 L8 1" fill="none" stroke="#777" stroke-width="1.3"/></svg>
<svg class="a" style="left:156.20px;top:253.36px;" width="8.30" height="7.00" viewBox="0 0 16.6 14"><path d="M0 1 Q0 0 1 0 H5.6 L6.8 2.9 H16.6 V14 H0 Z" fill="#2a9fd6"/></svg>
<span class="t " style="left:167.40px;top:256.56px;font-size:6.3px;color:#333;letter-spacing:-0.05px;font-weight:500;font-family:'Liberation Sans','Noto Sans CJK JP',sans-serif">製作</span>
<span class="t " style="left:271.30px;top:256.56px;font-size:6.3px;color:#333;font-weight:500;font-family:'Noto Sans CJK JP',sans-serif">岡本 直哉</span>
<span class="t dj" style="left:312.20px;top:256.56px;font-size:6.35px;color:#999;">2025/12/25</span>
<span class="t dj" style="left:364.50px;top:256.56px;font-size:6.35px;color:#999;">2026/01/16</span>
<div class="a" style="left:417.20px;top:254.26px;width:5.30px;height:5.30px;background:#00e600"></div>
<span class="t " style="left:427.00px;top:256.56px;font-size:6.3px;color:#2a2a2a;font-weight:500">完了</span>
<svg class="a" style="left:166.70px;top:265.83px;" width="6.32" height="8.57" viewBox="0 0 12 16.2"><path d="M1 2.5 H3.6 V1.2 Q3.6 0.4 4.4 0.4 H7.6 Q8.4 0.4 8.4 1.2 V2.5 H11 Q12 2.5 12 3.5 V15 Q12 16 11 16 H1 Q0 16 0 15 V3.5 Q0 2.5 1 2.5 Z" fill="#2a9fd6"/><rect x="1.3" y="4" width="9.4" height="10.6" fill="#fff" opacity="0"/><path d="M3 9.4 L5.3 11.7 L9.3 6.6" fill="none" stroke="#fff" stroke-width="1.8"/></svg>
<span class="t " style="left:177.00px;top:269.63px;font-size:6.3px;color:#333;letter-spacing:-0.05px;font-weight:500;font-family:'Liberation Sans','Noto Sans CJK JP',sans-serif">メイン画面実装</span>
<span class="t " style="left:271.30px;top:269.63px;font-size:6.3px;color:#333;font-weight:500;font-family:'Noto Sans CJK JP',sans-serif">鈴木 あ…</span>
<span class="t dj" style="left:312.20px;top:269.63px;font-size:6.35px;color:#262626;">2025/12/26</span>
<span class="t dj" style="left:364.50px;top:269.63px;font-size:6.35px;color:#262626;">2026/01/09</span>
<div class="a" style="left:417.20px;top:267.33px;width:5.30px;height:5.30px;background:#00e600"></div>
<span class="t " style="left:427.00px;top:269.63px;font-size:6.3px;color:#2a2a2a;font-weight:500">完了</span>
<svg class="a" style="left:166.70px;top:278.91px;" width="6.32" height="8.57" viewBox="0 0 12 16.2"><path d="M1 2.5 H3.6 V1.2 Q3.6 0.4 4.4 0.4 H7.6 Q8.4 0.4 8.4 1.2 V2.5 H11 Q12 2.5 12 3.5 V15 Q12 16 11 16 H1 Q0 16 0 15 V3.5 Q0 2.5 1 2.5 Z" fill="#2a9fd6"/></svg>
<span class="t " style="left:177.00px;top:282.71px;font-size:6.3px;color:#333;letter-spacing:-0.05px;font-weight:500;font-family:'Liberation Sans','Noto Sans CJK JP',sans-serif">工数入力機能実装</span>
<span class="t " style="left:271.30px;top:282.71px;font-size:6.3px;color:#333;font-weight:500;font-family:'Noto Sans CJK JP',sans-serif">鈴木 あ…</span>
<span class="t dj" style="left:312.20px;top:282.71px;font-size:6.35px;color:#262626;">2025/12/29</span>
<span class="t dj" style="left:364.50px;top:282.71px;font-size:6.35px;color:#262626;">2026/01/12</span>
<div class="a" style="left:417.20px;top:280.41px;width:5.30px;height:5.30px;background:#2b3aa0"></div>
<span class="t " style="left:427.00px;top:282.71px;font-size:6.3px;color:#2a2a2a;font-weight:500">作業中</span>
<svg class="a" style="left:166.70px;top:291.98px;" width="6.32" height="8.57" viewBox="0 0 12 16.2"><path d="M1 2.5 H3.6 V1.2 Q3.6 0.4 4.4 0.4 H7.6 Q8.4 0.4 8.4 1.2 V2.5 H11 Q12 2.5 12 3.5 V15 Q12 16 11 16 H1 Q0 16 0 15 V3.5 Q0 2.5 1 2.5 Z" fill="#2a9fd6"/></svg>
<span class="t " style="left:177.00px;top:295.78px;font-size:6.3px;color:#333;letter-spacing:-0.05px;font-weight:500;font-family:'Noto Sans CJK JP',sans-serif">プロジェクト作成機能…</span>
<span class="t " style="left:271.30px;top:295.78px;font-size:6.3px;color:#333;font-weight:500;font-family:'Noto Sans CJK JP',sans-serif">鈴木 あ…</span>
<span class="t dj" style="left:312.20px;top:295.78px;font-size:6.35px;color:#262626;">2026/01/05</span>
<span class="t dj" style="left:364.50px;top:295.78px;font-size:6.35px;color:#262626;">2026/01/14</span>
<div class="a" style="left:417.20px;top:293.48px;width:5.30px;height:5.30px;background:#2b3aa0"></div>
<span class="t " style="left:427.00px;top:295.78px;font-size:6.3px;color:#2a2a2a;font-weight:500">作業中</span>
<svg class="a" style="left:166.70px;top:305.05px;" width="6.32" height="8.57" viewBox="0 0 12 16.2"><path d="M1 2.5 H3.6 V1.2 Q3.6 0.4 4.4 0.4 H7.6 Q8.4 0.4 8.4 1.2 V2.5 H11 Q12 2.5 12 3.5 V15 Q12 16 11 16 H1 Q0 16 0 15 V3.5 Q0 2.5 1 2.5 Z" fill="#2a9fd6"/></svg>
<span class="t " style="left:177.00px;top:308.85px;font-size:6.3px;color:#333;letter-spacing:-0.05px;font-weight:500;font-family:'Liberation Sans','Noto Sans CJK JP',sans-serif">進捗率計算機能実装</span>
<span class="t " style="left:271.30px;top:308.85px;font-size:6.3px;color:#333;font-weight:500;font-family:'Noto Sans CJK JP',sans-serif">鈴木 あ…</span>
<span class="t dj" style="left:312.20px;top:308.85px;font-size:6.35px;color:#262626;">2026/01/02</span>
<span class="t dj" style="left:364.50px;top:308.85px;font-size:6.35px;color:#262626;">2026/01/16</span>
<div class="a" style="left:417.20px;top:306.55px;width:5.30px;height:5.30px;background:#2b3aa0"></div>
<span class="t " style="left:427.00px;top:308.85px;font-size:6.3px;color:#2a2a2a;font-weight:500">作業中</span>
<svg class="a" style="left:166.70px;top:318.12px;" width="6.32" height="8.57" viewBox="0 0 12 16.2"><path d="M1 2.5 H3.6 V1.2 Q3.6 0.4 4.4 0.4 H7.6 Q8.4 0.4 8.4 1.2 V2.5 H11 Q12 2.5 12 3.5 V15 Q12 16 11 16 H1 Q0 16 0 15 V3.5 Q0 2.5 1 2.5 Z" fill="#2a9fd6"/></svg>
<span class="t " style="left:177.00px;top:321.92px;font-size:6.3px;color:#333;letter-spacing:-0.05px;font-weight:500;font-family:'Liberation Sans','Noto Sans CJK JP',sans-serif">工数集計機能実装</span>
<span class="t " style="left:271.30px;top:321.92px;font-size:6.3px;color:#333;font-weight:500;font-family:'Noto Sans CJK JP',sans-serif">鈴木 あ…</span>
<span class="t dj" style="left:312.20px;top:321.92px;font-size:6.35px;color:#262626;">2025/12/29</span>
<span class="t dj" style="left:364.50px;top:321.92px;font-size:6.35px;color:#262626;">2026/01/16</span>
<div class="a" style="left:417.20px;top:319.62px;width:5.30px;height:5.30px;background:#2b3aa0"></div>
<span class="t " style="left:427.00px;top:321.92px;font-size:6.3px;color:#2a2a2a;font-weight:500">作業中</span>
<svg class="a" style="left:166.70px;top:331.19px;" width="6.32" height="8.57" viewBox="0 0 12 16.2"><path d="M1 2.5 H3.6 V1.2 Q3.6 0.4 4.4 0.4 H7.6 Q8.4 0.4 8.4 1.2 V2.5 H11 Q12 2.5 12 3.5 V15 Q12 16 11 16 H1 Q0 16 0 15 V3.5 Q0 2.5 1 2.5 Z" fill="#2a9fd6"/><rect x="1.3" y="4" width="9.4" height="10.6" fill="#fff" opacity="0"/><path d="M3 9.4 L5.3 11.7 L9.3 6.6" fill="none" stroke="#fff" stroke-width="1.8"/></svg>
<span class="t " style="left:177.00px;top:334.99px;font-size:6.3px;color:#333;letter-spacing:-0.05px;font-weight:500;font-family:'Liberation Sans','Noto Sans CJK JP',sans-serif">ログイン機能実装</span>
<span class="t " style="left:271.30px;top:334.99px;font-size:6.3px;color:#333;font-weight:500;font-family:'Noto Sans CJK JP',sans-serif">鈴木 あ…</span>
<span class="t dj" style="left:312.20px;top:334.99px;font-size:6.35px;color:#262626;">2025/12/29</span>
<span class="t dj" style="left:364.50px;top:334.99px;font-size:6.35px;color:#262626;">2026/01/01</span>
<div class="a" style="left:417.20px;top:332.69px;width:5.30px;height:5.30px;background:#00e600"></div>
<span class="t " style="left:427.00px;top:334.99px;font-size:6.3px;color:#2a2a2a;font-weight:500">完了</span>
<svg class="a" style="left:166.70px;top:344.27px;" width="6.32" height="8.57" viewBox="0 0 12 16.2"><path d="M1 2.5 H3.6 V1.2 Q3.6 0.4 4.4 0.4 H7.6 Q8.4 0.4 8.4 1.2 V2.5 H11 Q12 2.5 12 3.5 V15 Q12 16 11 16 H1 Q0 16 0 15 V3.5 Q0 2.5 1 2.5 Z" fill="#a9a9a9"/></svg>
<span class="t " style="left:177.00px;top:348.07px;font-size:6.3px;color:#333;letter-spacing:-0.05px;font-weight:500;font-family:'Liberation Sans','Noto Sans CJK JP',sans-serif">製作レビュー</span>
<span class="t " style="left:271.30px;top:348.07px;font-size:6.3px;color:#333;font-weight:500;font-family:'Noto Sans CJK JP',sans-serif">田島 大樹</span>
<span class="t dj" style="left:312.20px;top:348.07px;font-size:6.35px;color:#262626;">2025/12/25</span>
<span class="t dj" style="left:364.50px;top:348.07px;font-size:6.35px;color:#262626;">2025/12/26</span>
<span class="t dj" style="left:427.00px;top:348.07px;font-size:6.5px;color:#2a2a2a;font-weight:400">N/A</span>
<svg class="a" style="left:166.70px;top:357.34px;" width="6.32" height="8.57" viewBox="0 0 12 16.2"><path d="M1 2.5 H3.6 V1.2 Q3.6 0.4 4.4 0.4 H7.6 Q8.4 0.4 8.4 1.2 V2.5 H11 Q12 2.5 12 3.5 V15 Q12 16 11 16 H1 Q0 16 0 15 V3.5 Q0 2.5 1 2.5 Z" fill="#a9a9a9"/></svg>
<span class="t " style="left:177.00px;top:361.14px;font-size:6.3px;color:#333;letter-spacing:-0.05px;font-weight:500;font-family:'Liberation Sans','Noto Sans CJK JP',sans-serif">レビュー指摘修正</span>
<span class="t " style="left:271.30px;top:361.14px;font-size:6.3px;color:#333;font-weight:500;font-family:'Noto Sans CJK JP',sans-serif">田島 大樹</span>
<span class="t dj" style="left:427.00px;top:361.14px;font-size:6.5px;color:#2a2a2a;font-weight:400">N/A</span>
<svg class="a" style="left:148.90px;top:373.11px;" width="4.60" height="3.00" viewBox="0 0 9 6"><path d="M1 1 L4.5 4.6 L8 1" fill="none" stroke="#777" stroke-width="1.3"/></svg>
<svg class="a" style="left:156.20px;top:371.01px;" width="8.30" height="7.00" viewBox="0 0 16.6 14"><path d="M0 1 Q0 0 1 0 H5.6 L6.8 2.9 H16.6 V14 H0 Z" fill="#f0487f"/></svg>
<span class="t " style="left:167.40px;top:374.21px;font-size:6.3px;color:#333;letter-spacing:-0.05px;font-weight:500;font-family:'Liberation Sans','Noto Sans CJK JP',sans-serif">単体テスト設計</span>
<span class="t " style="left:271.30px;top:374.21px;font-size:6.3px;color:#333;font-weight:500;font-family:'Noto Sans CJK JP',sans-serif">岡本 直哉</span>
<span class="t dj" style="left:312.20px;top:374.21px;font-size:6.35px;color:#999;">2025/12/31</span>
<span class="t dj" style="left:364.50px;top:374.21px;font-size:6.35px;color:#999;">2026/01/07</span>
<div class="a" style="left:417.20px;top:371.91px;width:5.30px;height:5.30px;background:#2b3aa0"></div>
<span class="t " style="left:427.00px;top:374.21px;font-size:6.3px;color:#2a2a2a;font-weight:500">作業中</span>
<svg class="a" style="left:166.70px;top:383.48px;" width="6.32" height="8.57" viewBox="0 0 12 16.2"><path d="M1 2.5 H3.6 V1.2 Q3.6 0.4 4.4 0.4 H7.6 Q8.4 0.4 8.4 1.2 V2.5 H11 Q12 2.5 12 3.5 V15 Q12 16 11 16 H1 Q0 16 0 15 V3.5 Q0 2.5 1 2.5 Z" fill="#a9a9a9"/></svg>
<span class="t " style="left:177.00px;top:387.28px;font-size:6.3px;color:#333;letter-spacing:-0.05px;font-weight:500;font-family:'Liberation Sans','Noto Sans CJK JP',sans-serif">詳細設計書理解</span>
<span class="t " style="left:271.30px;top:387.28px;font-size:6.3px;color:#333;font-weight:500;font-family:'Noto Sans CJK JP',sans-serif">田島 大樹</span>
<span class="t dj" style="left:427.00px;top:387.28px;font-size:6.5px;color:#2a2a2a;font-weight:400">N/A</span>
<svg class="a" style="left:166.70px;top:396.55px;" width="6.32" height="8.57" viewBox="0 0 12 16.2"><path d="M1 2.5 H3.6 V1.2 Q3.6 0.4 4.4 0.4 H7.6 Q8.4 0.4 8.4 1.2 V2.5 H11 Q12 2.5 12 3.5 V15 Q12 16 11 16 H1 Q0 16 0 15 V3.5 Q0 2.5 1 2.5 Z" fill="#f0487f"/></svg>
<span class="t " style="left:177.00px;top:400.35px;font-size:6.3px;color:#333;letter-spacing:-0.05px;font-weight:500;font-family:'Liberation Sans','Noto Sans CJK JP',sans-serif">単体テスト仕様設計</span>
<span class="t dj" style="left:312.20px;top:400.35px;font-size:6.35px;color:#262626;">2026/01/02</span>
<span class="t dj" style="left:364.50px;top:400.35px;font-size:6.35px;color:#262626;">2026/01/07</span>
<div class="a" style="left:417.20px;top:398.05px;width:5.30px;height:5.30px;background:#2b3aa0"></div>
<span class="t " style="left:427.00px;top:400.35px;font-size:6.3px;color:#2a2a2a;font-weight:500">作業中</span>
<svg class="a" style="left:166.70px;top:409.63px;" width="6.32" height="8.57" viewBox="0 0 12 16.2"><path d="M1 2.5 H3.6 V1.2 Q3.6 0.4 4.4 0.4 H7.6 Q8.4 0.4 8.4 1.2 V2.5 H11 Q12 2.5 12 3.5 V15 Q12 16 11 16 H1 Q0 16 0 15 V3.5 Q0 2.5 1 2.5 Z" fill="#a9a9a9"/></svg>
<span class="t " style="left:177.00px;top:413.43px;font-size:6.3px;color:#333;letter-spacing:-0.05px;font-weight:500;font-family:'Liberation Sans','Noto Sans CJK JP',sans-serif">単体テスト仕様レビュー</span>
<span class="t " style="left:271.30px;top:413.43px;font-size:6.3px;color:#333;font-weight:500;font-family:'Noto Sans CJK JP',sans-serif">田島 大樹</span>
<span class="t dj" style="left:312.20px;top:413.43px;font-size:6.35px;color:#262626;">2025/12/31</span>
<span class="t dj" style="left:364.50px;top:413.43px;font-size:6.35px;color:#262626;">2026/01/02</span>
<span class="t dj" style="left:427.00px;top:413.43px;font-size:6.5px;color:#2a2a2a;font-weight:400">N/A</span>
<svg class="a" style="left:166.70px;top:422.70px;" width="6.32" height="8.57" viewBox="0 0 12 16.2"><path d="M1 2.5 H3.6 V1.2 Q3.6 0.4 4.4 0.4 H7.6 Q8.4 0.4 8.4 1.2 V2.5 H11 Q12 2.5 12 3.5 V15 Q12 16 11 16 H1 Q0 16 0 15 V3.5 Q0 2.5 1 2.5 Z" fill="#a9a9a9"/></svg>
<span class="t " style="left:177.00px;top:426.50px;font-size:6.3px;color:#333;letter-spacing:-0.05px;font-weight:500;font-family:'Liberation Sans','Noto Sans CJK JP',sans-serif">レビュー指摘修正</span>
<span class="t " style="left:271.30px;top:426.50px;font-size:6.3px;color:#333;font-weight:500;font-family:'Noto Sans CJK JP',sans-serif">田島 大樹</span>
<span class="t dj" style="left:312.20px;top:426.50px;font-size:6.35px;color:#262626;">2025/12/31</span>
<span class="t dj" style="left:364.50px;top:426.50px;font-size:6.35px;color:#262626;">2026/01/02</span>
<span class="t dj" style="left:427.00px;top:426.50px;font-size:6.5px;color:#2a2a2a;font-weight:400">N/A</span>
<svg class="a" style="left:148.90px;top:438.47px;" width="4.60" height="3.00" viewBox="0 0 9 6"><path d="M1 1 L4.5 4.6 L8 1" fill="none" stroke="#777" stroke-width="1.3"/></svg>
<svg class="a" style="left:156.20px;top:436.37px;" width="8.30" height="7.00" viewBox="0 0 16.6 14"><path d="M0 1 Q0 0 1 0 H5.6 L6.8 2.9 H16.6 V14 H0 Z" fill="#2a9fd6"/></svg>
<span class="t " style="left:167.40px;top:439.57px;font-size:6.3px;color:#333;letter-spacing:-0.05px;font-weight:500;font-family:'Liberation Sans','Noto Sans CJK JP',sans-serif">結合テスト設計</span>
<span class="t " style="left:271.30px;top:439.57px;font-size:6.3px;color:#333;font-weight:500;font-family:'Noto Sans CJK JP',sans-serif">岡本 直哉</span>
<span class="t dj" style="left:312.20px;top:439.57px;font-size:6.35px;color:#999;">2026/01/06</span>
<span class="t dj" style="left:364.50px;top:439.57px;font-size:6.35px;color:#999;">2026/01/12</span>
<div class="a" style="left:417.20px;top:437.27px;width:5.30px;height:5.30px;background:#2b3aa0"></div>
<span class="t " style="left:427.00px;top:439.57px;font-size:6.3px;color:#2a2a2a;font-weight:500">作業中</span>
<svg class="a" style="left:166.70px;top:448.84px;" width="6.32" height="8.57" viewBox="0 0 12 16.2"><path d="M1 2.5 H3.6 V1.2 Q3.6 0.4 4.4 0.4 H7.6 Q8.4 0.4 8.4 1.2 V2.5 H11 Q12 2.5 12 3.5 V15 Q12 16 11 16 H1 Q0 16 0 15 V3.5 Q0 2.5 1 2.5 Z" fill="#a9a9a9"/></svg>
<span class="t " style="left:177.00px;top:452.64px;font-size:6.3px;color:#333;letter-spacing:-0.05px;font-weight:500;font-family:'Liberation Sans','Noto Sans CJK JP',sans-serif">外部仕様書理解</span>
<span class="t " style="left:271.30px;top:452.64px;font-size:6.3px;color:#333;font-weight:500;font-family:'Noto Sans CJK JP',sans-serif">田島 大樹</span>
<span class="t dj" style="left:427.00px;top:452.64px;font-size:6.5px;color:#2a2a2a;font-weight:400">N/A</span>
<svg class="a" style="left:166.70px;top:461.91px;" width="6.32" height="8.57" viewBox="0 0 12 16.2"><path d="M1 2.5 H3.6 V1.2 Q3.6 0.4 4.4 0.4 H7.6 Q8.4 0.4 8.4 1.2 V2.5 H11 Q12 2.5 12 3.5 V15 Q12 16 11 16 H1 Q0 16 0 15 V3.5 Q0 2.5 1 2.5 Z" fill="#2a9fd6"/></svg>
<span class="t " style="left:177.00px;top:465.71px;font-size:6.3px;color:#333;letter-spacing:-0.05px;font-weight:500;font-family:'Liberation Sans','Noto Sans CJK JP',sans-serif">結合テスト仕様設計</span>
<span class="t " style="left:271.30px;top:465.71px;font-size:6.3px;color:#333;font-weight:500;font-family:'Noto Sans CJK JP',sans-serif">田島 大樹</span>
<span class="t dj" style="left:312.20px;top:465.71px;font-size:6.35px;color:#262626;">2026/01/06</span>
<span class="t dj" style="left:364.50px;top:465.71px;font-size:6.35px;color:#262626;">2026/01/12</span>
<div class="a" style="left:417.20px;top:463.41px;width:5.30px;height:5.30px;background:#2b3aa0"></div>
<span class="t " style="left:427.00px;top:465.71px;font-size:6.3px;color:#2a2a2a;font-weight:500">作業中</span>
<svg class="a" style="left:166.70px;top:474.99px;" width="6.32" height="8.57" viewBox="0 0 12 16.2"><path d="M1 2.5 H3.6 V1.2 Q3.6 0.4 4.4 0.4 H7.6 Q8.4 0.4 8.4 1.2 V2.5 H11 Q12 2.5 12 3.5 V15 Q12 16 11 16 H1 Q0 16 0 15 V3.5 Q0 2.5 1 2.5 Z" fill="#2a9fd6"/></svg>
<span class="t " style="left:177.00px;top:478.79px;font-size:6.3px;color:#333;letter-spacing:-0.05px;font-weight:500;font-family:'Liberation Sans','Noto Sans CJK JP',sans-serif">結合テスト仕様レビュー</span>
<span class="t " style="left:271.30px;top:478.79px;font-size:6.3px;color:#333;font-weight:500;font-family:'Noto Sans CJK JP',sans-serif">田島 大樹</span>
<span class="t dj" style="left:312.20px;top:478.79px;font-size:6.35px;color:#262626;">2026/01/09</span>
<span class="t dj" style="left:364.50px;top:478.79px;font-size:6.35px;color:#262626;">2026/01/12</span>
<div class="a" style="left:417.20px;top:476.49px;width:5.30px;height:5.30px;background:#2b3aa0"></div>
<span class="t " style="left:427.00px;top:478.79px;font-size:6.3px;color:#2a2a2a;font-weight:500">作業中</span>
<svg class="a" style="left:166.70px;top:488.06px;" width="6.32" height="8.57" viewBox="0 0 12 16.2"><path d="M1 2.5 H3.6 V1.2 Q3.6 0.4 4.4 0.4 H7.6 Q8.4 0.4 8.4 1.2 V2.5 H11 Q12 2.5 12 3.5 V15 Q12 16 11 16 H1 Q0 16 0 15 V3.5 Q0 2.5 1 2.5 Z" fill="#a9a9a9"/></svg>
<span class="t " style="left:177.00px;top:491.86px;font-size:6.3px;color:#333;letter-spacing:-0.05px;font-weight:500;font-family:'Liberation Sans','Noto Sans CJK JP',sans-serif">レビュー指摘修正</span>
<span class="t " style="left:271.30px;top:491.86px;font-size:6.3px;color:#333;font-weight:500;font-family:'Noto Sans CJK JP',sans-serif">田島 大樹</span>
<span class="t dj" style="left:312.20px;top:491.86px;font-size:6.35px;color:#262626;">2026/01/09</span>
<span class="t dj" style="left:364.50px;top:491.86px;font-size:6.35px;color:#262626;">2026/01/12</span>
<span class="t dj" style="left:427.00px;top:491.86px;font-size:6.5px;color:#2a2a2a;font-weight:400">N/A</span>
<svg class="a" style="left:149.40px;top:503.13px;" width="2.80" height="4.60" viewBox="0 0 5.6 9.2"><path d="M1 1 L4.4 4.6 L1 8.2" fill="none" stroke="#888" stroke-width="1.2"/></svg>
<svg class="a" style="left:156.20px;top:501.73px;" width="8.30" height="7.00" viewBox="0 0 16.6 14"><path d="M0 1 Q0 0 1 0 H5.6 L6.8 2.9 H16.6 V14 H0 Z" fill="#2a9fd6"/></svg>
<span class="t " style="left:167.40px;top:504.93px;font-size:6.3px;color:#333;letter-spacing:-0.05px;font-weight:500;font-family:'Liberation Sans','Noto Sans CJK JP',sans-serif">単体テスト実施</span>
<span class="t dj" style="left:312.20px;top:504.93px;font-size:6.35px;color:#999;">2026/01/12</span>
<span class="t dj" style="left:364.50px;top:504.93px;font-size:6.35px;color:#999;">2026/01/30</span>
<div class="a" style="left:417.20px;top:502.63px;width:5.30px;height:5.30px;background:#c8c8c8"></div>
<span class="t " style="left:427.00px;top:504.93px;font-size:6.3px;color:#2a2a2a;font-weight:500">未着手</span>
<svg class="a" style="left:149.40px;top:516.20px;" width="2.80" height="4.60" viewBox="0 0 5.6 9.2"><path d="M1 1 L4.4 4.6 L1 8.2" fill="none" stroke="#888" stroke-width="1.2"/></svg>
<svg class="a" style="left:156.20px;top:514.80px;" width="8.30" height="7.00" viewBox="0 0 16.6 14"><path d="M0 1 Q0 0 1 0 H5.6 L6.8 2.9 H16.6 V14 H0 Z" fill="#2a9fd6"/></svg>
<span class="t " style="left:167.40px;top:518.00px;font-size:6.3px;color:#333;letter-spacing:-0.05px;font-weight:500;font-family:'Liberation Sans','Noto Sans CJK JP',sans-serif">結合テスト実施</span>
<span class="t dj" style="left:312.20px;top:518.00px;font-size:6.35px;color:#999;">2026/02/09</span>
<span class="t dj" style="left:364.50px;top:518.00px;font-size:6.35px;color:#999;">2026/02/27</span>
<div class="a" style="left:417.20px;top:515.70px;width:5.30px;height:5.30px;background:#c8c8c8"></div>
<span class="t " style="left:427.00px;top:518.00px;font-size:6.3px;color:#2a2a2a;font-weight:500">未着手</span>
<svg class="a" style="left:149.40px;top:529.27px;" width="2.80" height="4.60" viewBox="0 0 5.6 9.2"><path d="M1 1 L4.4 4.6 L1 8.2" fill="none" stroke="#888" stroke-width="1.2"/></svg>
<svg class="a" style="left:156.20px;top:527.87px;" width="8.30" height="7.00" viewBox="0 0 16.6 14"><path d="M0 1 Q0 0 1 0 H5.6 L6.8 2.9 H16.6 V14 H0 Z" fill="#a9a9a9"/></svg>
<span class="t " style="left:167.40px;top:531.07px;font-size:6.3px;color:#333;letter-spacing:-0.05px;font-weight:500;font-family:'Liberation Sans','Noto Sans CJK JP',sans-serif">手戻り</span>
<span class="t dj" style="left:427.00px;top:531.07px;font-size:6.5px;color:#2a2a2a;font-weight:400">N/A</span>
<svg width="940" height="584"><g transform="translate(263.50 229.82) scale(0.506)"><path d="M-4.2 9.2 L-3 6 L3 6 L4.2 9.2 Z" fill="#5a5f66"/><path d="M-1.3 6 L0 8.8 L1.3 6Z" fill="#fff"/><ellipse cx="-6.2" cy="0.8" rx="1.2" ry="1.6" fill="#f2c9a8"/><ellipse cx="6.2" cy="0.8" rx="1.2" ry="1.6" fill="#f2c9a8"/><ellipse cx="0" cy="0.8" rx="5.9" ry="5.8" fill="#f8d7bb"/><path d="M-6.6 -0.2 Q-8 -7.6 -2 -8 Q0 -9.4 2.4 -8 Q8 -7.4 6.6 -0.2 Q5.6 -4.2 2 -3.4 Q0 -4.6 -2.4 -3.4 Q-5.6 -4 -6.6 -0.2Z" fill="#111"/><circle cx="-2.4" cy="0.3" r="1.7" fill="#fff" stroke="#999" stroke-width="0.5"/><circle cx="2.4" cy="0.3" r="1.7" fill="#fff" stroke="#999" stroke-width="0.5"/><circle cx="-2.2" cy="0.4" r="0.5" fill="#333"/><circle cx="2.2" cy="0.4" r="0.5" fill="#333"/><ellipse cx="0" cy="4" rx="1.3" ry="1.5" fill="#e0142c"/></g><g transform="translate(263.50 242.89) scale(0.506)"><path d="M-4.2 9.2 L-3 6 L3 6 L4.2 9.2 Z" fill="#5a5f66"/><path d="M-1.3 6 L0 8.8 L1.3 6Z" fill="#fff"/><ellipse cx="-6.2" cy="0.8" rx="1.2" ry="1.6" fill="#f2c9a8"/><ellipse cx="6.2" cy="0.8" rx="1.2" ry="1.6" fill="#f2c9a8"/><ellipse cx="0" cy="0.8" rx="5.9" ry="5.8" fill="#f8d7bb"/><path d="M-6.6 -0.2 Q-8 -7.6 -2 -8 Q0 -9.4 2.4 -8 Q8 -7.4 6.6 -0.2 Q5.6 -4.2 2 -3.4 Q0 -4.6 -2.4 -3.4 Q-5.6 -4 -6.6 -0.2Z" fill="#111"/><circle cx="-2.4" cy="0.3" r="1.7" fill="#fff" stroke="#999" stroke-width="0.5"/><circle cx="2.4" cy="0.3" r="1.7" fill="#fff" stroke="#999" stroke-width="0.5"/><circle cx="-2.2" cy="0.4" r="0.5" fill="#333"/><circle cx="2.2" cy="0.4" r="0.5" fill="#333"/><ellipse cx="0" cy="4" rx="1.3" ry="1.5" fill="#e0142c"/></g><g transform="translate(263.50 255.96) scale(0.506)"><path d="M-4.2 9.2 L-3 6 L3 6 L4.2 9.2 Z" fill="#5a5f66"/><path d="M-1.3 6 L0 8.8 L1.3 6Z" fill="#fff"/><ellipse cx="-6.2" cy="0.8" rx="1.2" ry="1.6" fill="#f2c9a8"/><ellipse cx="6.2" cy="0.8" rx="1.2" ry="1.6" fill="#f2c9a8"/><ellipse cx="0" cy="0.8" rx="5.9" ry="5.8" fill="#f8d7bb"/><path d="M-6.6 -0.2 Q-8 -7.6 -2 -8 Q0 -9.4 2.4 -8 Q8 -7.4 6.6 -0.2 Q5.6 -4.2 2 -3.4 Q0 -4.6 -2.4 -3.4 Q-5.6 -4 -6.6 -0.2Z" fill="#111"/><circle cx="-2.4" cy="0.3" r="1.7" fill="#fff" stroke="#999" stroke-width="0.5"/><circle cx="2.4" cy="0.3" r="1.7" fill="#fff" stroke="#999" stroke-width="0.5"/><circle cx="-2.2" cy="0.4" r="0.5" fill="#333"/><circle cx="2.2" cy="0.4" r="0.5" fill="#333"/><ellipse cx="0" cy="4" rx="1.3" ry="1.5" fill="#e0142c"/></g><g transform="translate(263.50 269.13)"><path d="M-3.2 3 Q-4 -4.4 0 -4.4 Q4 -4.4 3.2 3 Z" fill="#1b1d22"/><ellipse cx="0" cy="0.5" rx="2.4" ry="2.7" fill="#f6cfb4"/><path d="M-2.6 -0.5 Q-1.5 -2.6 2.6 -1.7 L2.4 -3.1 L-2.4 -3.1Z" fill="#1b1d22"/><ellipse cx="-1.2" cy="1.1" rx="0.8" ry="0.5" fill="#f0a0a8"/><ellipse cx="1.2" cy="1.1" rx="0.8" ry="0.5" fill="#f0a0a8"/><path d="M-1.8 0 H-0.5 M0.5 0 H1.8" stroke="#333" stroke-width="0.5"/><path d="M-2 4.4 Q0 2.6 2 4.4Z" fill="#2a2a2e"/></g><g transform="translate(263.50 282.21)"><path d="M-3.2 3 Q-4 -4.4 0 -4.4 Q4 -4.4 3.2 3 Z" fill="#1b1d22"/><ellipse cx="0" cy="0.5" rx="2.4" ry="2.7" fill="#f6cfb4"/><path d="M-2.6 -0.5 Q-1.5 -2.6 2.6 -1.7 L2.4 -3.1 L-2.4 -3.1Z" fill="#1b1d22"/><ellipse cx="-1.2" cy="1.1" rx="0.8" ry="0.5" fill="#f0a0a8"/><ellipse cx="1.2" cy="1.1" rx="0.8" ry="0.5" fill="#f0a0a8"/><path d="M-1.8 0 H-0.5 M0.5 0 H1.8" stroke="#333" stroke-width="0.5"/><path d="M-2 4.4 Q0 2.6 2 4.4Z" fill="#2a2a2e"/></g><g transform="translate(263.50 295.28)"><path d="M-3.2 3 Q-4 -4.4 0 -4.4 Q4 -4.4 3.2 3 Z" fill="#1b1d22"/><ellipse cx="0" cy="0.5" rx="2.4" ry="2.7" fill="#f6cfb4"/><path d="M-2.6 -0.5 Q-1.5 -2.6 2.6 -1.7 L2.4 -3.1 L-2.4 -3.1Z" fill="#1b1d22"/><ellipse cx="-1.2" cy="1.1" rx="0.8" ry="0.5" fill="#f0a0a8"/><ellipse cx="1.2" cy="1.1" rx="0.8" ry="0.5" fill="#f0a0a8"/><path d="M-1.8 0 H-0.5 M0.5 0 H1.8" stroke="#333" stroke-width="0.5"/><path d="M-2 4.4 Q0 2.6 2 4.4Z" fill="#2a2a2e"/></g><g transform="translate(263.50 308.35)"><path d="M-3.2 3 Q-4 -4.4 0 -4.4 Q4 -4.4 3.2 3 Z" fill="#1b1d22"/><ellipse cx="0" cy="0.5" rx="2.4" ry="2.7" fill="#f6cfb4"/><path d="M-2.6 -0.5 Q-1.5 -2.6 2.6 -1.7 L2.4 -3.1 L-2.4 -3.1Z" fill="#1b1d22"/><ellipse cx="-1.2" cy="1.1" rx="0.8" ry="0.5" fill="#f0a0a8"/><ellipse cx="1.2" cy="1.1" rx="0.8" ry="0.5" fill="#f0a0a8"/><path d="M-1.8 0 H-0.5 M0.5 0 H1.8" stroke="#333" stroke-width="0.5"/><path d="M-2 4.4 Q0 2.6 2 4.4Z" fill="#2a2a2e"/></g><g transform="translate(263.50 321.42)"><path d="M-3.2 3 Q-4 -4.4 0 -4.4 Q4 -4.4 3.2 3 Z" fill="#1b1d22"/><ellipse cx="0" cy="0.5" rx="2.4" ry="2.7" fill="#f6cfb4"/><path d="M-2.6 -0.5 Q-1.5 -2.6 2.6 -1.7 L2.4 -3.1 L-2.4 -3.1Z" fill="#1b1d22"/><ellipse cx="-1.2" cy="1.1" rx="0.8" ry="0.5" fill="#f0a0a8"/><ellipse cx="1.2" cy="1.1" rx="0.8" ry="0.5" fill="#f0a0a8"/><path d="M-1.8 0 H-0.5 M0.5 0 H1.8" stroke="#333" stroke-width="0.5"/><path d="M-2 4.4 Q0 2.6 2 4.4Z" fill="#2a2a2e"/></g><g transform="translate(263.50 334.49)"><path d="M-3.2 3 Q-4 -4.4 0 -4.4 Q4 -4.4 3.2 3 Z" fill="#1b1d22"/><ellipse cx="0" cy="0.5" rx="2.4" ry="2.7" fill="#f6cfb4"/><path d="M-2.6 -0.5 Q-1.5 -2.6 2.6 -1.7 L2.4 -3.1 L-2.4 -3.1Z" fill="#1b1d22"/><ellipse cx="-1.2" cy="1.1" rx="0.8" ry="0.5" fill="#f0a0a8"/><ellipse cx="1.2" cy="1.1" rx="0.8" ry="0.5" fill="#f0a0a8"/><path d="M-1.8 0 H-0.5 M0.5 0 H1.8" stroke="#333" stroke-width="0.5"/><path d="M-2 4.4 Q0 2.6 2 4.4Z" fill="#2a2a2e"/></g><g transform="translate(263.50 347.57)"><path d="M-1.8 4.4 Q0 3 1.8 4.4Z" fill="#9fd0ee"/><ellipse cx="0" cy="0.7" rx="3.6" ry="3" fill="#f8caa2"/><path d="M-3.5 -0.2 Q-3.9 -4.2 0 -4.2 Q3.9 -4.2 3.5 -0.2 Q2.4 -1.9 0 -1.6 Q-2.4 -1.9 -3.5 -0.2Z" fill="#7d6650"/><ellipse cx="-2.1" cy="1.5" rx="0.9" ry="0.7" fill="#f59a62"/><ellipse cx="2.1" cy="1.5" rx="0.9" ry="0.7" fill="#f59a62"/><circle cx="-1.2" cy="0.3" r="0.42" fill="#333"/><circle cx="1.2" cy="0.3" r="0.42" fill="#333"/><ellipse cx="0" cy="2.3" rx="0.6" ry="0.45" fill="#d9454f"/></g><g transform="translate(263.50 360.64)"><path d="M-1.8 4.4 Q0 3 1.8 4.4Z" fill="#9fd0ee"/><ellipse cx="0" cy="0.7" rx="3.6" ry="3" fill="#f8caa2"/><path d="M-3.5 -0.2 Q-3.9 -4.2 0 -4.2 Q3.9 -4.2 3.5 -0.2 Q2.4 -1.9 0 -1.6 Q-2.4 -1.9 -3.5 -0.2Z" fill="#7d6650"/><ellipse cx="-2.1" cy="1.5" rx="0.9" ry="0.7" fill="#f59a62"/><ellipse cx="2.1" cy="1.5" rx="0.9" ry="0.7" fill="#f59a62"/><circle cx="-1.2" cy="0.3" r="0.42" fill="#333"/><circle cx="1.2" cy="0.3" r="0.42" fill="#333"/><ellipse cx="0" cy="2.3" rx="0.6" ry="0.45" fill="#d9454f"/></g><g transform="translate(263.50 373.61) scale(0.506)"><path d="M-4.2 9.2 L-3 6 L3 6 L4.2 9.2 Z" fill="#5a5f66"/><path d="M-1.3 6 L0 8.8 L1.3 6Z" fill="#fff"/><ellipse cx="-6.2" cy="0.8" rx="1.2" ry="1.6" fill="#f2c9a8"/><ellipse cx="6.2" cy="0.8" rx="1.2" ry="1.6" fill="#f2c9a8"/><ellipse cx="0" cy="0.8" rx="5.9" ry="5.8" fill="#f8d7bb"/><path d="M-6.6 -0.2 Q-8 -7.6 -2 -8 Q0 -9.4 2.4 -8 Q8 -7.4 6.6 -0.2 Q5.6 -4.2 2 -3.4 Q0 -4.6 -2.4 -3.4 Q-5.6 -4 -6.6 -0.2Z" fill="#111"/><circle cx="-2.4" cy="0.3" r="1.7" fill="#fff" stroke="#999" stroke-width="0.5"/><circle cx="2.4" cy="0.3" r="1.7" fill="#fff" stroke="#999" stroke-width="0.5"/><circle cx="-2.2" cy="0.4" r="0.5" fill="#333"/><circle cx="2.2" cy="0.4" r="0.5" fill="#333"/><ellipse cx="0" cy="4" rx="1.3" ry="1.5" fill="#e0142c"/></g><g transform="translate(263.50 386.78)"><path d="M-1.8 4.4 Q0 3 1.8 4.4Z" fill="#9fd0ee"/><ellipse cx="0" cy="0.7" rx="3.6" ry="3" fill="#f8caa2"/><path d="M-3.5 -0.2 Q-3.9 -4.2 0 -4.2 Q3.9 -4.2 3.5 -0.2 Q2.4 -1.9 0 -1.6 Q-2.4 -1.9 -3.5 -0.2Z" fill="#7d6650"/><ellipse cx="-2.1" cy="1.5" rx="0.9" ry="0.7" fill="#f59a62"/><ellipse cx="2.1" cy="1.5" rx="0.9" ry="0.7" fill="#f59a62"/><circle cx="-1.2" cy="0.3" r="0.42" fill="#333"/><circle cx="1.2" cy="0.3" r="0.42" fill="#333"/><ellipse cx="0" cy="2.3" rx="0.6" ry="0.45" fill="#d9454f"/></g><g transform="translate(263.50 412.93)"><path d="M-1.8 4.4 Q0 3 1.8 4.4Z" fill="#9fd0ee"/><ellipse cx="0" cy="0.7" rx="3.6" ry="3" fill="#f8caa2"/><path d="M-3.5 -0.2 Q-3.9 -4.2 0 -4.2 Q3.9 -4.2 3.5 -0.2 Q2.4 -1.9 0 -1.6 Q-2.4 -1.9 -3.5 -0.2Z" fill="#7d6650"/><ellipse cx="-2.1" cy="1.5" rx="0.9" ry="0.7" fill="#f59a62"/><ellipse cx="2.1" cy="1.5" rx="0.9" ry="0.7" fill="#f59a62"/><circle cx="-1.2" cy="0.3" r="0.42" fill="#333"/><circle cx="1.2" cy="0.3" r="0.42" fill="#333"/><ellipse cx="0" cy="2.3" rx="0.6" ry="0.45" fill="#d9454f"/></g><g transform="translate(263.50 426.00)"><path d="M-1.8 4.4 Q0 3 1.8 4.4Z" fill="#9fd0ee"/><ellipse cx="0" cy="0.7" rx="3.6" ry="3" fill="#f8caa2"/><path d="M-3.5 -0.2 Q-3.9 -4.2 0 -4.2 Q3.9 -4.2 3.5 -0.2 Q2.4 -1.9 0 -1.6 Q-2.4 -1.9 -3.5 -0.2Z" fill="#7d6650"/><ellipse cx="-2.1" cy="1.5" rx="0.9" ry="0.7" fill="#f59a62"/><ellipse cx="2.1" cy="1.5" rx="0.9" ry="0.7" fill="#f59a62"/><circle cx="-1.2" cy="0.3" r="0.42" fill="#333"/><circle cx="1.2" cy="0.3" r="0.42" fill="#333"/><ellipse cx="0" cy="2.3" rx="0.6" ry="0.45" fill="#d9454f"/></g><g transform="translate(263.50 438.97) scale(0.506)"><path d="M-4.2 9.2 L-3 6 L3 6 L4.2 9.2 Z" fill="#5a5f66"/><path d="M-1.3 6 L0 8.8 L1.3 6Z" fill="#fff"/><ellipse cx="-6.2" cy="0.8" rx="1.2" ry="1.6" fill="#f2c9a8"/><ellipse cx="6.2" cy="0.8" rx="1.2" ry="1.6" fill="#f2c9a8"/><ellipse cx="0" cy="0.8" rx="5.9" ry="5.8" fill="#f8d7bb"/><path d="M-6.6 -0.2 Q-8 -7.6 -2 -8 Q0 -9.4 2.4 -8 Q8 -7.4 6.6 -0.2 Q5.6 -4.2 2 -3.4 Q0 -4.6 -2.4 -3.4 Q-5.6 -4 -6.6 -0.2Z" fill="#111"/><circle cx="-2.4" cy="0.3" r="1.7" fill="#fff" stroke="#999" stroke-width="0.5"/><circle cx="2.4" cy="0.3" r="1.7" fill="#fff" stroke="#999" stroke-width="0.5"/><circle cx="-2.2" cy="0.4" r="0.5" fill="#333"/><circle cx="2.2" cy="0.4" r="0.5" fill="#333"/><ellipse cx="0" cy="4" rx="1.3" ry="1.5" fill="#e0142c"/></g><g transform="translate(263.50 452.14)"><path d="M-1.8 4.4 Q0 3 1.8 4.4Z" fill="#9fd0ee"/><ellipse cx="0" cy="0.7" rx="3.6" ry="3" fill="#f8caa2"/><path d="M-3.5 -0.2 Q-3.9 -4.2 0 -4.2 Q3.9 -4.2 3.5 -0.2 Q2.4 -1.9 0 -1.6 Q-2.4 -1.9 -3.5 -0.2Z" fill="#7d6650"/><ellipse cx="-2.1" cy="1.5" rx="0.9" ry="0.7" fill="#f59a62"/><ellipse cx="2.1" cy="1.5" rx="0.9" ry="0.7" fill="#f59a62"/><circle cx="-1.2" cy="0.3" r="0.42" fill="#333"/><circle cx="1.2" cy="0.3" r="0.42" fill="#333"/><ellipse cx="0" cy="2.3" rx="0.6" ry="0.45" fill="#d9454f"/></g><g transform="translate(263.50 465.21)"><path d="M-1.8 4.4 Q0 3 1.8 4.4Z" fill="#9fd0ee"/><ellipse cx="0" cy="0.7" rx="3.6" ry="3" fill="#f8caa2"/><path d="M-3.5 -0.2 Q-3.9 -4.2 0 -4.2 Q3.9 -4.2 3.5 -0.2 Q2.4 -1.9 0 -1.6 Q-2.4 -1.9 -3.5 -0.2Z" fill="#7d6650"/><ellipse cx="-2.1" cy="1.5" rx="0.9" ry="0.7" fill="#f59a62"/><ellipse cx="2.1" cy="1.5" rx="0.9" ry="0.7" fill="#f59a62"/><circle cx="-1.2" cy="0.3" r="0.42" fill="#333"/><circle cx="1.2" cy="0.3" r="0.42" fill="#333"/><ellipse cx="0" cy="2.3" rx="0.6" ry="0.45" fill="#d9454f"/></g><g transform="translate(263.50 478.29)"><path d="M-1.8 4.4 Q0 3 1.8 4.4Z" fill="#9fd0ee"/><ellipse cx="0" cy="0.7" rx="3.6" ry="3" fill="#f8caa2"/><path d="M-3.5 -0.2 Q-3.9 -4.2 0 -4.2 Q3.9 -4.2 3.5 -0.2 Q2.4 -1.9 0 -1.6 Q-2.4 -1.9 -3.5 -0.2Z" fill="#7d6650"/><ellipse cx="-2.1" cy="1.5" rx="0.9" ry="0.7" fill="#f59a62"/><ellipse cx="2.1" cy="1.5" rx="0.9" ry="0.7" fill="#f59a62"/><circle cx="-1.2" cy="0.3" r="0.42" fill="#333"/><circle cx="1.2" cy="0.3" r="0.42" fill="#333"/><ellipse cx="0" cy="2.3" rx="0.6" ry="0.45" fill="#d9454f"/></g><g transform="translate(263.50 491.36)"><path d="M-1.8 4.4 Q0 3 1.8 4.4Z" fill="#9fd0ee"/><ellipse cx="0" cy="0.7" rx="3.6" ry="3" fill="#f8caa2"/><path d="M-3.5 -0.2 Q-3.9 -4.2 0 -4.2 Q3.9 -4.2 3.5 -0.2 Q2.4 -1.9 0 -1.6 Q-2.4 -1.9 -3.5 -0.2Z" fill="#7d6650"/><ellipse cx="-2.1" cy="1.5" rx="0.9" ry="0.7" fill="#f59a62"/><ellipse cx="2.1" cy="1.5" rx="0.9" ry="0.7" fill="#f59a62"/><circle cx="-1.2" cy="0.3" r="0.42" fill="#333"/><circle cx="1.2" cy="0.3" r="0.42" fill="#333"/><ellipse cx="0" cy="2.3" rx="0.6" ry="0.45" fill="#d9454f"/></g></svg>
<div class="a" style="left:455.00px;top:121.00px;width:2.60px;height:463.00px;background:#d4d4d4"></div>
<div class="a" style="left:107.00px;top:576.80px;width:210.00px;height:3.80px;background:#b4b4b4;border-radius:1.9px"></div>
<div class="a" style="left:685.60px;top:576.00px;width:52.40px;height:4.60px;background:#b4b4b4;border-radius:2.3px"></div>
<svg width="940" height="584" style="font-family:'DejaVu Sans','Noto Sans CJK JP',sans-serif"><defs><clipPath id="gc"><rect x="457.6" y="121" width="482.4" height="463"/></clipPath></defs><g clip-path="url(#gc)"><rect x="457.6" y="121" width="500" height="24" fill="#f4f4f4"/><rect x="450.73" y="145" width="21.97" height="392.41" fill="#f5f5f5"/><rect x="527.62" y="145" width="21.97" height="392.41" fill="#f5f5f5"/><rect x="604.52" y="145" width="21.97" height="392.41" fill="#f5f5f5"/><rect x="681.41" y="145" width="21.97" height="392.41" fill="#f5f5f5"/><rect x="758.31" y="145" width="21.97" height="392.41" fill="#f5f5f5"/><rect x="835.20" y="145" width="21.97" height="392.41" fill="#f5f5f5"/><rect x="912.10" y="145" width="21.97" height="392.41" fill="#f5f5f5"/><rect x="988.99" y="145" width="21.97" height="392.41" fill="#f5f5f5"/><rect x="457.6" y="157.87" width="500" height="0.9" fill="#e2e2e2"/><rect x="457.6" y="170.94" width="500" height="0.9" fill="#e2e2e2"/><rect x="457.6" y="184.02" width="500" height="0.9" fill="#e2e2e2"/><rect x="457.6" y="197.09" width="500" height="0.9" fill="#e2e2e2"/><rect x="457.6" y="210.16" width="500" height="0.9" fill="#e2e2e2"/><rect x="457.6" y="223.23" width="500" height="0.9" fill="#e2e2e2"/><rect x="457.6" y="236.30" width="500" height="0.9" fill="#e2e2e2"/><rect x="457.6" y="249.38" width="500" height="0.9" fill="#e2e2e2"/><rect x="457.6" y="262.45" width="500" height="0.9" fill="#e2e2e2"/><rect x="457.6" y="275.52" width="500" height="0.9" fill="#e2e2e2"/><rect x="457.6" y="288.59" width="500" height="0.9" fill="#e2e2e2"/><rect x="457.6" y="301.66" width="500" height="0.9" fill="#e2e2e2"/><rect x="457.6" y="314.74" width="500" height="0.9" fill="#e2e2e2"/><rect x="457.6" y="327.81" width="500" height="0.9" fill="#e2e2e2"/><rect x="457.6" y="340.88" width="500" height="0.9" fill="#e2e2e2"/><rect x="457.6" y="353.95" width="500" height="0.9" fill="#e2e2e2"/><rect x="457.6" y="367.02" width="500" height="0.9" fill="#e2e2e2"/><rect x="457.6" y="380.10" width="500" height="0.9" fill="#e2e2e2"/><rect x="457.6" y="393.17" width="500" height="0.9" fill="#e2e2e2"/><rect x="457.6" y="406.24" width="500" height="0.9" fill="#e2e2e2"/><rect x="457.6" y="419.31" width="500" height="0.9" fill="#e2e2e2"/><rect x="457.6" y="432.38" width="500" height="0.9" fill="#e2e2e2"/><rect x="457.6" y="445.46" width="500" height="0.9" fill="#e2e2e2"/><rect x="457.6" y="458.53" width="500" height="0.9" fill="#e2e2e2"/><rect x="457.6" y="471.60" width="500" height="0.9" fill="#e2e2e2"/><rect x="457.6" y="484.67" width="500" height="0.9" fill="#e2e2e2"/><rect x="457.6" y="497.74" width="500" height="0.9" fill="#c9def0"/><rect x="457.6" y="510.82" width="500" height="0.9" fill="#c9def0"/><rect x="457.6" y="523.89" width="500" height="0.9" fill="#e2e2e2"/><rect x="472.30" y="133" width="0.8" height="404.41" fill="#e2e2e2"/><rect x="549.20" y="133" width="0.8" height="404.41" fill="#e2e2e2"/><rect x="626.09" y="133" width="0.8" height="404.41" fill="#e2e2e2"/><rect x="702.99" y="133" width="0.8" height="404.41" fill="#e2e2e2"/><rect x="779.88" y="133" width="0.8" height="404.41" fill="#e2e2e2"/><rect x="856.77" y="133" width="0.8" height="404.41" fill="#e2e2e2"/><rect x="933.67" y="133" width="0.8" height="404.41" fill="#e2e2e2"/><rect x="457.6" y="132.6" width="500" height="0.8" fill="#e2e2e2"/><rect x="457.6" y="144.6" width="500" height="0.8" fill="#dcdcdc"/><rect x="457.6" y="537.01" width="500" height="1.2" fill="#d0d0d0"/><rect x="658.84" y="121" width="0.8" height="12" fill="#e2e2e2"/><text x="662.84" y="129.1" font-size="5.45" fill="#505050" font-family="'Liberation Sans','Noto Sans CJK JP',sans-serif">2026年1月</text><text x="476.50" y="141.1" font-size="5.45" fill="#505050" font-family="'Liberation Sans','Noto Sans CJK JP',sans-serif">12月15日</text><text x="553.39" y="141.1" font-size="5.45" fill="#505050" font-family="'Liberation Sans','Noto Sans CJK JP',sans-serif">12月22日</text><text x="630.29" y="141.1" font-size="5.45" fill="#505050" font-family="'Liberation Sans','Noto Sans CJK JP',sans-serif">12月29日</text><text x="707.18" y="141.1" font-size="5.45" fill="#505050" font-family="'Liberation Sans','Noto Sans CJK JP',sans-serif">1月5日</text><text x="784.08" y="141.1" font-size="5.45" fill="#505050" font-family="'Liberation Sans','Noto Sans CJK JP',sans-serif">1月12日</text><text x="860.97" y="141.1" font-size="5.45" fill="#505050" font-family="'Liberation Sans','Noto Sans CJK JP',sans-serif">1月19日</text><text x="937.87" y="141.1" font-size="5.45" fill="#505050" font-family="'Liberation Sans','Noto Sans CJK JP',sans-serif">1月26日</text><text x="664.44" y="180.03" font-size="6.4" fill="#999">11/17 - 12/31</text><text x="609.52" y="206.17" font-size="6.4" fill="#999">12/15 - 12/26</text><text x="468.69" y="219.25" text-anchor="end" font-size="6.3" fill="#999">外部仕様:佐野 俊二</text><text x="532.62" y="219.25" font-size="6.4" fill="#999">12/16 - 12/19</text><text x="534.60" y="232.32" text-anchor="end" font-size="6.3" fill="#999">基本設計:岡本 直哉</text><text x="576.56" y="232.32" font-size="6.4" fill="#999">12/22 - 12/23</text><text x="556.56" y="245.39" text-anchor="end" font-size="6.3" fill="#999">詳細設計:岡本 直哉</text><text x="609.52" y="245.39" font-size="6.4" fill="#999">12/24 - 12/26</text><text x="567.55" y="258.46" text-anchor="end" font-size="6.3" fill="#999">製作:岡本 直哉</text><text x="840.20" y="258.46" font-size="6.4" fill="#999">12/25 - 1/16</text><text x="578.53" y="271.53" text-anchor="end" font-size="6.3" fill="#999">メイン画面実装:鈴木 あいか</text><text x="769.31" y="271.53" font-size="6.4" fill="#999">12/26 - 1/9</text><text x="611.49" y="284.61" text-anchor="end" font-size="6.3" fill="#999">工数入力機能実装:鈴木 あいか</text><text x="802.26" y="284.61" font-size="6.4" fill="#999">12/29 - 1/12</text><text x="688.38" y="297.68" text-anchor="end" font-size="6.3" fill="#999">プロジェクト作成機能実装:鈴木 あいか</text><text x="824.23" y="297.68" font-size="6.4" fill="#999">1/5 - 1/14</text><text x="655.43" y="310.75" text-anchor="end" font-size="6.3" fill="#999">進捗率計算機能実装:鈴木 あいか</text><text x="846.20" y="310.75" font-size="6.4" fill="#999">1/2 - 1/16</text><text x="611.49" y="323.82" text-anchor="end" font-size="6.3" fill="#999">工数集計機能実装:鈴木 あいか</text><text x="846.20" y="323.82" font-size="6.4" fill="#999">12/29 - 1/16</text><text x="611.49" y="336.89" text-anchor="end" font-size="6.3" fill="#999">ログイン機能実装:鈴木 あいか</text><text x="681.43" y="336.89" font-size="6.4" fill="#999">12/29 - 1/1</text><text x="567.55" y="349.97" text-anchor="end" font-size="6.3" fill="#999">製作レビュー:田島 大樹</text><text x="615.52" y="349.97" font-size="6.4" fill="#999">12/25 - 12/26</text><text x="633.46" y="376.11" text-anchor="end" font-size="6.3" fill="#999">単体テスト設計:岡本 直哉</text><text x="741.34" y="376.11" font-size="6.4" fill="#999">12/31 - 1/7</text><text x="655.43" y="402.25" text-anchor="end" font-size="6.3" fill="#999">単体テスト仕様設計</text><text x="747.34" y="402.25" font-size="6.4" fill="#999">1/2 - 1/7</text><text x="633.46" y="415.33" text-anchor="end" font-size="6.3" fill="#999">単体テスト仕様レビュー:田島 大樹</text><text x="692.41" y="415.33" font-size="6.4" fill="#999">12/31 - 1/2</text><text x="633.46" y="428.40" text-anchor="end" font-size="6.3" fill="#999">レビュー指摘修正:田島 大樹</text><text x="692.41" y="428.40" font-size="6.4" fill="#999">12/31 - 1/2</text><text x="699.37" y="441.47" text-anchor="end" font-size="6.3" fill="#999">結合テスト設計:岡本 直哉</text><text x="796.26" y="441.47" font-size="6.4" fill="#999">1/6 - 1/12</text><text x="699.37" y="467.61" text-anchor="end" font-size="6.3" fill="#999">結合テスト仕様設計:田島 大樹</text><text x="802.26" y="467.61" font-size="6.4" fill="#999">1/6 - 1/12</text><text x="732.33" y="480.69" text-anchor="end" font-size="6.3" fill="#999">結合テスト仕様レビュー:田島 大樹</text><text x="802.26" y="480.69" font-size="6.4" fill="#999">1/9 - 1/12</text><text x="732.33" y="493.76" text-anchor="end" font-size="6.3" fill="#999">レビュー指摘修正:田島 大樹</text><text x="802.26" y="493.76" font-size="6.4" fill="#999">1/9 - 1/12</text><text x="765.28" y="506.83" text-anchor="end" font-size="6.3" fill="#555">単体テスト実施</text><path d="M-130.77 148.29 H1296.58 V152.99 H-128.77 L-130.77 154.99 Z" fill="#27a0f4"/><path d="M1296.58 152.49 V154.99 L1294.38 152.49 Z" fill="#27a0f4"/><path d="M166.12 174.43 H659.14 V181.13 L657.44 179.13 H167.82 L166.12 181.13 Z" fill="#c4e7a4" stroke="#7fcc50" stroke-width="0.9"/><rect x="165.82" y="173.98" width="493.62" height="1.5" fill="#7fcc50"/><path d="M473.40 187.50 H1296.58 V192.20 H475.40 L473.40 194.20 Z" fill="#27a0f4"/><path d="M1296.58 191.70 V194.20 L1294.38 191.70 Z" fill="#27a0f4"/><path d="M473.40 200.57 H604.52 V207.27 L602.52 205.27 H475.40 L473.40 207.27 Z" fill="#d6d6d6"/><path d="M484.69 213.65 H527.33 V220.35 L525.62 218.35 H486.38 L484.69 220.35 Z" fill="#c4e7a4" stroke="#7fcc50" stroke-width="0.9"/><rect x="484.38" y="213.20" width="43.24" height="1.5" fill="#7fcc50"/><path d="M550.60 226.72 H571.26 V233.42 L569.56 231.42 H552.30 L550.60 233.42 Z" fill="#c4e7a4" stroke="#7fcc50" stroke-width="0.9"/><rect x="550.30" y="226.27" width="21.27" height="1.5" fill="#7fcc50"/><path d="M572.56 239.79 H604.22 V246.49 L602.52 244.49 H574.26 L572.56 246.49 Z" fill="#c4e7a4" stroke="#7fcc50" stroke-width="0.9"/><rect x="572.26" y="239.34" width="32.25" height="1.5" fill="#7fcc50"/><path d="M797.70 253.26 H834.80 V259.56 L833.20 257.16 H797.70 Z" fill="#a8d7f8" stroke="#2ea3f4" stroke-width="0.9"/><path d="M583.25 252.86 H797.70 V257.56 H585.25 L583.25 259.56 Z" fill="#27a0f4"/><rect x="594.53" y="266.33" width="163.37" height="7.00" rx="1" fill="#b9e398" stroke="#9bd772" stroke-width="0.8"/><rect x="627.49" y="279.41" width="163.37" height="7.00" rx="1" fill="#93cff3" stroke="#5cb8ee" stroke-width="0.8"/><path d="M628.09 279.01 H724.60 V286.81 H628.09 Q627.09 286.81 627.09 285.81 V280.01 Q627.09 279.01 628.09 279.01 Z" fill="#30abe8"/><rect x="704.38" y="292.48" width="108.45" height="7.00" rx="1" fill="#93cff3" stroke="#5cb8ee" stroke-width="0.8"/><path d="M704.99 292.08 H751.70 V299.88 H704.99 Q703.99 299.88 703.99 298.88 V293.08 Q703.99 292.08 704.99 292.08 Z" fill="#30abe8"/><rect x="671.43" y="305.55" width="163.37" height="7.00" rx="1" fill="#93cff3" stroke="#5cb8ee" stroke-width="0.8"/><path d="M672.03 305.15 H801.70 V312.95 H672.03 Q671.03 312.95 671.03 311.95 V306.15 Q671.03 305.15 672.03 305.15 Z" fill="#30abe8"/><rect x="627.49" y="318.62" width="207.31" height="7.00" rx="1" fill="#93cff3" stroke="#5cb8ee" stroke-width="0.8"/><path d="M628.09 318.22 H729.90 V326.02 H628.09 Q627.09 326.02 627.09 325.02 V319.22 Q627.09 318.22 628.09 318.22 Z" fill="#30abe8"/><rect x="627.49" y="331.69" width="42.54" height="7.00" rx="1" fill="#b9e398" stroke="#9bd772" stroke-width="0.8"/><rect x="583.15" y="344.37" width="21.37" height="7.80" rx="1" fill="#d6d6d6"/><path d="M662.00 370.91 H735.94 V377.21 L734.34 374.81 H662.00 Z" fill="#fbcbd9" stroke="#f4578c" stroke-width="0.9"/><path d="M649.16 370.51 H662.00 V375.21 H651.16 L649.16 377.21 Z" fill="#f43b7a"/><rect x="671.43" y="397.05" width="64.51" height="7.00" rx="1" fill="#fbcbd9" stroke="#f4578c" stroke-width="0.8"/><path d="M672.03 396.65 H682.70 V404.45 H672.03 Q671.03 404.45 671.03 403.45 V397.65 Q671.03 396.65 672.03 396.65 Z" fill="#f43b7a"/><rect x="649.06" y="409.73" width="32.35" height="7.80" rx="1" fill="#d6d6d6"/><rect x="649.06" y="422.80" width="32.35" height="7.80" rx="1" fill="#d6d6d6"/><path d="M732.50 436.27 H790.87 V442.57 L789.26 440.17 H732.50 Z" fill="#a8d7f8" stroke="#2ea3f4" stroke-width="0.9"/><path d="M715.07 435.87 H732.50 V440.57 H717.07 L715.07 442.57 Z" fill="#27a0f4"/><rect x="715.37" y="462.41" width="75.49" height="7.00" rx="1" fill="#93cff3" stroke="#5cb8ee" stroke-width="0.8"/><path d="M715.97 462.01 H728.60 V469.81 H715.97 Q714.97 469.81 714.97 468.81 V463.01 Q714.97 462.01 715.97 462.01 Z" fill="#30abe8"/><rect x="748.33" y="475.49" width="42.54" height="7.00" rx="1" fill="#93cff3" stroke="#5cb8ee" stroke-width="0.8"/><path d="M748.93 475.09 H769.00 V482.89 H748.93 Q747.93 482.89 747.93 481.89 V476.09 Q747.93 475.09 748.93 475.09 Z" fill="#30abe8"/><rect x="747.93" y="488.16" width="43.34" height="7.80" rx="1" fill="#d6d6d6"/><path d="M781.38 501.63 H988.59 V507.93 L986.99 505.53 H782.98 L781.38 507.93 Z" fill="#a8d7f8" stroke="#2ea3f4" stroke-width="0.9"/><path d="M659.44 176.83 L945.00 176.83" fill="none" stroke="#4d9be0" stroke-width="0.80" stroke-linejoin="round"/><path d="M527.62 215.75 L553.70 215.75 L553.70 224.22" fill="none" stroke="#1f7fd0" stroke-width="1.00" stroke-linejoin="round"/><path d="M551.50 222.72 L555.90 222.72 L553.70 226.32 Z" fill="#1f7fd0"/><path d="M571.56 228.82 L575.50 228.82 L575.50 237.29" fill="none" stroke="#1f7fd0" stroke-width="1.00" stroke-linejoin="round"/><path d="M573.30 235.79 L577.70 235.79 L575.50 239.39 Z" fill="#1f7fd0"/><path d="M604.52 241.99 L608.70 241.99 L608.70 249.23 L575.50 249.23 L575.50 254.96 L580.00 254.96" fill="none" stroke="#e02424" stroke-width="1.00" stroke-linejoin="round"/><path d="M578.75 252.76 L578.75 257.16 L582.75 254.96 Z" fill="#e02424"/><path d="M835.20 255.06 L838.80 255.06 L838.80 497.39 L773.60 497.39 L773.60 503.43 L777.00 503.43" fill="none" stroke="#ea5a5a" stroke-width="1.00" stroke-linejoin="round"/><path d="M776.48 501.23 L776.48 505.63 L780.48 503.43 Z" fill="#e02424"/><path d="M736.34 372.71 L784.00 372.71 L784.00 498.73" fill="none" stroke="#5fa3e0" stroke-width="1.20" stroke-linejoin="round"/><path d="M781.80 497.53 L786.20 497.53 L784.00 501.13 Z" fill="#1f7fd0"/><path d="M758.50 141.50 L732.50 151.79 L758.50 157.52 L758.50 185.27 L728.50 191.00 L758.50 196.74 L758.50 250.63 L751.50 256.36 L758.50 262.10 L758.50 276.77 L724.60 282.51 L758.50 288.24 L758.50 289.84 L744.50 295.58 L758.50 301.31 L758.50 302.91 L801.70 308.65 L758.50 314.39 L758.50 315.99 L733.00 321.72 L758.50 327.46 L758.50 368.27 L662.00 374.01 L758.50 379.75 L758.50 394.42 L682.70 400.15 L758.50 405.89 L758.50 433.63 L732.50 439.37 L758.50 445.11 L758.50 459.78 L728.60 465.51 L758.50 471.25 L758.50 472.85 L780.40 478.59 L758.50 484.32 L758.50 537.41" fill="none" stroke="#f07a7a" stroke-width="0.90" stroke-linejoin="round"/><circle cx="758.50" cy="140.2" r="2.35" fill="#fff" stroke="#e8212e" stroke-width="1.15"/><path d="M757.20 142.4 L758.50 144.2 L759.80 142.4" fill="#e8212e" stroke="#e8212e" stroke-width="0.5"/></g></svg>
</body></html>
